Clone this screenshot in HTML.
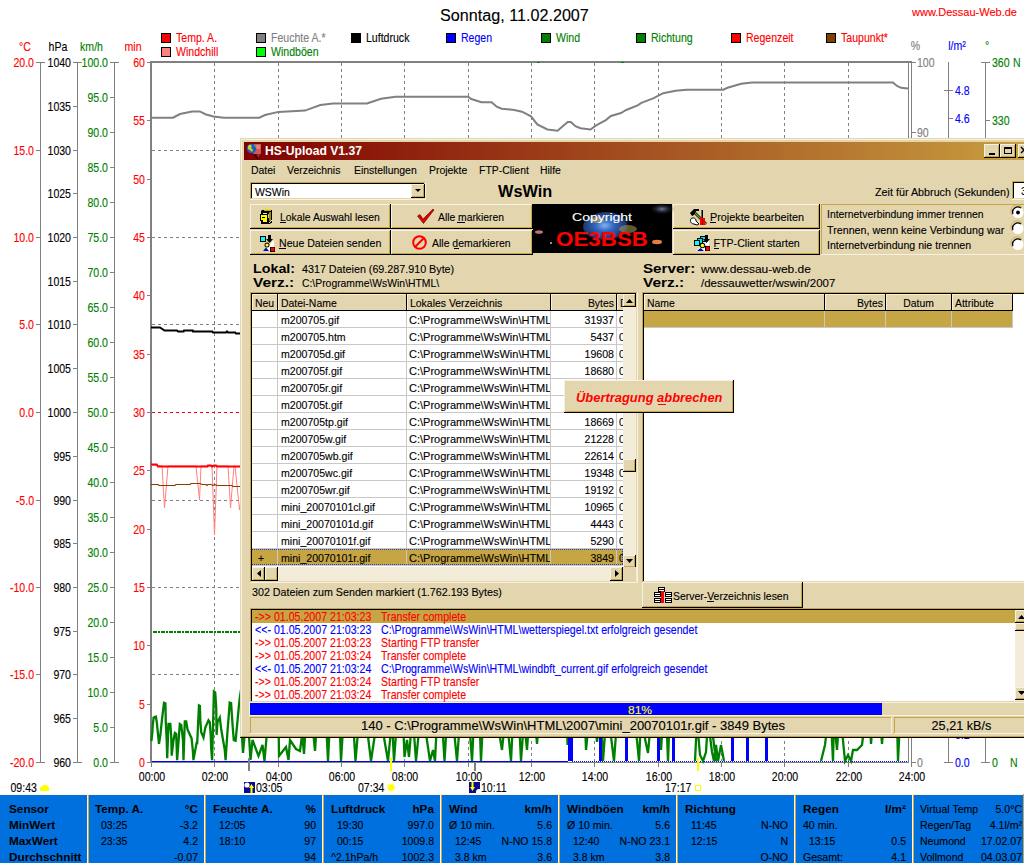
<!DOCTYPE html>
<html><head><meta charset="utf-8"><title>HS-Upload</title>
<style>html,body{margin:0;padding:0;background:#fff;width:1024px;height:863px;overflow:hidden} svg text{white-space:pre}</style>
</head><body>
<svg width="1024" height="863" viewBox="0 0 1024 863" style="position:absolute;left:0;top:0;font-family:'Liberation Sans',sans-serif"><rect x="0" y="0" width="1024" height="863" fill="#fff" /><text transform="translate(440 21) scale(1.01 1)" fill="#000" stroke="#000" stroke-width="0.12" font-size="16" font-weight="normal" font-style="normal" text-anchor="start" >Sonntag, 11.02.2007</text><text x="912" y="16" fill="#f00" stroke="#f00" stroke-width="0.12" font-size="11" font-weight="normal" font-style="normal" text-anchor="start" >www.Dessau-Web.de</text><rect x="161" y="33" width="10" height="10" fill="#000" /><rect x="162" y="34" width="8" height="8" fill="#f00" /><text transform="translate(176 42) scale(0.88 1)" fill="#f00" stroke="#f00" stroke-width="0.12" font-size="12" font-weight="normal" font-style="normal" text-anchor="start" >Temp. A.</text><rect x="256" y="33" width="10" height="10" fill="#000" /><rect x="257" y="34" width="8" height="8" fill="#808080" /><text transform="translate(271 42) scale(0.88 1)" fill="#808080" stroke="#808080" stroke-width="0.12" font-size="12" font-weight="normal" font-style="normal" text-anchor="start" >Feuchte A.*</text><rect x="351" y="33" width="10" height="10" fill="#000" /><rect x="352" y="34" width="8" height="8" fill="#000" /><text transform="translate(366 42) scale(0.88 1)" fill="#000" stroke="#000" stroke-width="0.12" font-size="12" font-weight="normal" font-style="normal" text-anchor="start" >Luftdruck</text><rect x="446" y="33" width="10" height="10" fill="#000" /><rect x="447" y="34" width="8" height="8" fill="#00f" /><text transform="translate(461 42) scale(0.88 1)" fill="#00f" stroke="#00f" stroke-width="0.12" font-size="12" font-weight="normal" font-style="normal" text-anchor="start" >Regen</text><rect x="541" y="33" width="10" height="10" fill="#000" /><rect x="542" y="34" width="8" height="8" fill="#008000" /><text transform="translate(556 42) scale(0.88 1)" fill="#008000" stroke="#008000" stroke-width="0.12" font-size="12" font-weight="normal" font-style="normal" text-anchor="start" >Wind</text><rect x="636" y="33" width="10" height="10" fill="#000" /><rect x="637" y="34" width="8" height="8" fill="#008000" /><text transform="translate(651 42) scale(0.88 1)" fill="#008000" stroke="#008000" stroke-width="0.12" font-size="12" font-weight="normal" font-style="normal" text-anchor="start" >Richtung</text><rect x="731" y="33" width="10" height="10" fill="#000" /><rect x="732" y="34" width="8" height="8" fill="#f00" /><text transform="translate(746 42) scale(0.88 1)" fill="#f00" stroke="#f00" stroke-width="0.12" font-size="12" font-weight="normal" font-style="normal" text-anchor="start" >Regenzeit</text><rect x="826" y="33" width="10" height="10" fill="#000" /><rect x="827" y="34" width="8" height="8" fill="#804000" /><text transform="translate(841 42) scale(0.88 1)" fill="#f00" stroke="#f00" stroke-width="0.12" font-size="12" font-weight="normal" font-style="normal" text-anchor="start" >Taupunkt*</text><rect x="161" y="47" width="10" height="10" fill="#000" /><rect x="162" y="48" width="8" height="8" fill="#ff8080" /><text transform="translate(176 56) scale(0.88 1)" fill="#f00" stroke="#f00" stroke-width="0.12" font-size="12" font-weight="normal" font-style="normal" text-anchor="start" >Windchill</text><rect x="256" y="47" width="10" height="10" fill="#000" /><rect x="257" y="48" width="8" height="8" fill="#00ff00" /><text transform="translate(271 56) scale(0.88 1)" fill="#008000" stroke="#008000" stroke-width="0.12" font-size="12" font-weight="normal" font-style="normal" text-anchor="start" >Windböen</text><text transform="translate(25 51) scale(0.88 1)" fill="#f00" stroke="#f00" stroke-width="0.12" font-size="12" font-weight="normal" font-style="normal" text-anchor="middle" >°C</text><text transform="translate(58 51) scale(0.88 1)" fill="#000" stroke="#000" stroke-width="0.12" font-size="12" font-weight="normal" font-style="normal" text-anchor="middle" >hPa</text><text transform="translate(91.5 51) scale(0.88 1)" fill="#008000" stroke="#008000" stroke-width="0.12" font-size="12" font-weight="normal" font-style="normal" text-anchor="middle" >km/h</text><text transform="translate(133 51) scale(0.88 1)" fill="#f00" stroke="#f00" stroke-width="0.12" font-size="12" font-weight="normal" font-style="normal" text-anchor="middle" >min</text><text transform="translate(915.5 50) scale(0.88 1)" fill="#808080" stroke="#808080" stroke-width="0.12" font-size="12" font-weight="normal" font-style="normal" text-anchor="middle" >%</text><text transform="translate(957 50) scale(0.88 1)" fill="#00f" stroke="#00f" stroke-width="0.12" font-size="12" font-weight="normal" font-style="normal" text-anchor="middle" >l/m²</text><text transform="translate(987 50) scale(0.88 1)" fill="#008000" stroke="#008000" stroke-width="0.12" font-size="12" font-weight="normal" font-style="normal" text-anchor="middle" >°</text><rect x="40" y="62" width="1" height="701" fill="#808080" /><rect x="77" y="62" width="1" height="701" fill="#808080" /><rect x="114" y="62" width="1" height="701" fill="#808080" /><rect x="150" y="61" width="2" height="702" fill="#808080" /><rect x="36" y="62" width="9" height="1" fill="#808080" /><rect x="36" y="762" width="9" height="1" fill="#808080" /><rect x="73" y="62" width="9" height="1" fill="#808080" /><rect x="73" y="762" width="9" height="1" fill="#808080" /><rect x="110" y="62" width="9" height="1" fill="#808080" /><rect x="110" y="762" width="9" height="1" fill="#808080" /><rect x="36" y="62" width="4" height="1" fill="#808080" /><text transform="translate(34 67) scale(0.88 1)" fill="#f00" stroke="#f00" stroke-width="0.12" font-size="12" font-weight="normal" font-style="normal" text-anchor="end" >20.0</text><rect x="36" y="150" width="4" height="1" fill="#808080" /><text transform="translate(34 155) scale(0.88 1)" fill="#f00" stroke="#f00" stroke-width="0.12" font-size="12" font-weight="normal" font-style="normal" text-anchor="end" >15.0</text><rect x="36" y="237" width="4" height="1" fill="#808080" /><text transform="translate(34 242) scale(0.88 1)" fill="#f00" stroke="#f00" stroke-width="0.12" font-size="12" font-weight="normal" font-style="normal" text-anchor="end" >10.0</text><rect x="36" y="324" width="4" height="1" fill="#808080" /><text transform="translate(34 329) scale(0.88 1)" fill="#f00" stroke="#f00" stroke-width="0.12" font-size="12" font-weight="normal" font-style="normal" text-anchor="end" >5.0</text><rect x="36" y="412" width="4" height="1" fill="#808080" /><text transform="translate(34 417) scale(0.88 1)" fill="#f00" stroke="#f00" stroke-width="0.12" font-size="12" font-weight="normal" font-style="normal" text-anchor="end" >0.0</text><rect x="36" y="500" width="4" height="1" fill="#808080" /><text transform="translate(34 505) scale(0.88 1)" fill="#f00" stroke="#f00" stroke-width="0.12" font-size="12" font-weight="normal" font-style="normal" text-anchor="end" >-5.0</text><rect x="36" y="587" width="4" height="1" fill="#808080" /><text transform="translate(34 592) scale(0.88 1)" fill="#f00" stroke="#f00" stroke-width="0.12" font-size="12" font-weight="normal" font-style="normal" text-anchor="end" >-10.0</text><rect x="36" y="674" width="4" height="1" fill="#808080" /><text transform="translate(34 679) scale(0.88 1)" fill="#f00" stroke="#f00" stroke-width="0.12" font-size="12" font-weight="normal" font-style="normal" text-anchor="end" >-15.0</text><rect x="36" y="762" width="4" height="1" fill="#808080" /><text transform="translate(34 767) scale(0.88 1)" fill="#f00" stroke="#f00" stroke-width="0.12" font-size="12" font-weight="normal" font-style="normal" text-anchor="end" >-20.0</text><rect x="73" y="62" width="4" height="1" fill="#808080" /><text transform="translate(71 67) scale(0.88 1)" fill="#000" stroke="#000" stroke-width="0.12" font-size="12" font-weight="normal" font-style="normal" text-anchor="end" >1040</text><rect x="73" y="106" width="4" height="1" fill="#808080" /><text transform="translate(71 111) scale(0.88 1)" fill="#000" stroke="#000" stroke-width="0.12" font-size="12" font-weight="normal" font-style="normal" text-anchor="end" >1035</text><rect x="73" y="150" width="4" height="1" fill="#808080" /><text transform="translate(71 155) scale(0.88 1)" fill="#000" stroke="#000" stroke-width="0.12" font-size="12" font-weight="normal" font-style="normal" text-anchor="end" >1030</text><rect x="73" y="193" width="4" height="1" fill="#808080" /><text transform="translate(71 198) scale(0.88 1)" fill="#000" stroke="#000" stroke-width="0.12" font-size="12" font-weight="normal" font-style="normal" text-anchor="end" >1025</text><rect x="73" y="237" width="4" height="1" fill="#808080" /><text transform="translate(71 242) scale(0.88 1)" fill="#000" stroke="#000" stroke-width="0.12" font-size="12" font-weight="normal" font-style="normal" text-anchor="end" >1020</text><rect x="73" y="281" width="4" height="1" fill="#808080" /><text transform="translate(71 286) scale(0.88 1)" fill="#000" stroke="#000" stroke-width="0.12" font-size="12" font-weight="normal" font-style="normal" text-anchor="end" >1015</text><rect x="73" y="324" width="4" height="1" fill="#808080" /><text transform="translate(71 329) scale(0.88 1)" fill="#000" stroke="#000" stroke-width="0.12" font-size="12" font-weight="normal" font-style="normal" text-anchor="end" >1010</text><rect x="73" y="368" width="4" height="1" fill="#808080" /><text transform="translate(71 373) scale(0.88 1)" fill="#000" stroke="#000" stroke-width="0.12" font-size="12" font-weight="normal" font-style="normal" text-anchor="end" >1005</text><rect x="73" y="412" width="4" height="1" fill="#808080" /><text transform="translate(71 417) scale(0.88 1)" fill="#000" stroke="#000" stroke-width="0.12" font-size="12" font-weight="normal" font-style="normal" text-anchor="end" >1000</text><rect x="73" y="456" width="4" height="1" fill="#808080" /><text transform="translate(71 461) scale(0.88 1)" fill="#000" stroke="#000" stroke-width="0.12" font-size="12" font-weight="normal" font-style="normal" text-anchor="end" >995</text><rect x="73" y="500" width="4" height="1" fill="#808080" /><text transform="translate(71 505) scale(0.88 1)" fill="#000" stroke="#000" stroke-width="0.12" font-size="12" font-weight="normal" font-style="normal" text-anchor="end" >990</text><rect x="73" y="543" width="4" height="1" fill="#808080" /><text transform="translate(71 548) scale(0.88 1)" fill="#000" stroke="#000" stroke-width="0.12" font-size="12" font-weight="normal" font-style="normal" text-anchor="end" >985</text><rect x="73" y="587" width="4" height="1" fill="#808080" /><text transform="translate(71 592) scale(0.88 1)" fill="#000" stroke="#000" stroke-width="0.12" font-size="12" font-weight="normal" font-style="normal" text-anchor="end" >980</text><rect x="73" y="631" width="4" height="1" fill="#808080" /><text transform="translate(71 636) scale(0.88 1)" fill="#000" stroke="#000" stroke-width="0.12" font-size="12" font-weight="normal" font-style="normal" text-anchor="end" >975</text><rect x="73" y="674" width="4" height="1" fill="#808080" /><text transform="translate(71 679) scale(0.88 1)" fill="#000" stroke="#000" stroke-width="0.12" font-size="12" font-weight="normal" font-style="normal" text-anchor="end" >970</text><rect x="73" y="718" width="4" height="1" fill="#808080" /><text transform="translate(71 723) scale(0.88 1)" fill="#000" stroke="#000" stroke-width="0.12" font-size="12" font-weight="normal" font-style="normal" text-anchor="end" >965</text><rect x="73" y="762" width="4" height="1" fill="#808080" /><text transform="translate(71 767) scale(0.88 1)" fill="#000" stroke="#000" stroke-width="0.12" font-size="12" font-weight="normal" font-style="normal" text-anchor="end" >960</text><rect x="110" y="62" width="4" height="1" fill="#808080" /><text transform="translate(108 67) scale(0.88 1)" fill="#008000" stroke="#008000" stroke-width="0.12" font-size="12" font-weight="normal" font-style="normal" text-anchor="end" >100.0</text><rect x="110" y="97" width="4" height="1" fill="#808080" /><text transform="translate(108 102) scale(0.88 1)" fill="#008000" stroke="#008000" stroke-width="0.12" font-size="12" font-weight="normal" font-style="normal" text-anchor="end" >95.0</text><rect x="110" y="132" width="4" height="1" fill="#808080" /><text transform="translate(108 137) scale(0.88 1)" fill="#008000" stroke="#008000" stroke-width="0.12" font-size="12" font-weight="normal" font-style="normal" text-anchor="end" >90.0</text><rect x="110" y="167" width="4" height="1" fill="#808080" /><text transform="translate(108 172) scale(0.88 1)" fill="#008000" stroke="#008000" stroke-width="0.12" font-size="12" font-weight="normal" font-style="normal" text-anchor="end" >85.0</text><rect x="110" y="202" width="4" height="1" fill="#808080" /><text transform="translate(108 207) scale(0.88 1)" fill="#008000" stroke="#008000" stroke-width="0.12" font-size="12" font-weight="normal" font-style="normal" text-anchor="end" >80.0</text><rect x="110" y="237" width="4" height="1" fill="#808080" /><text transform="translate(108 242) scale(0.88 1)" fill="#008000" stroke="#008000" stroke-width="0.12" font-size="12" font-weight="normal" font-style="normal" text-anchor="end" >75.0</text><rect x="110" y="272" width="4" height="1" fill="#808080" /><text transform="translate(108 277) scale(0.88 1)" fill="#008000" stroke="#008000" stroke-width="0.12" font-size="12" font-weight="normal" font-style="normal" text-anchor="end" >70.0</text><rect x="110" y="307" width="4" height="1" fill="#808080" /><text transform="translate(108 312) scale(0.88 1)" fill="#008000" stroke="#008000" stroke-width="0.12" font-size="12" font-weight="normal" font-style="normal" text-anchor="end" >65.0</text><rect x="110" y="342" width="4" height="1" fill="#808080" /><text transform="translate(108 347) scale(0.88 1)" fill="#008000" stroke="#008000" stroke-width="0.12" font-size="12" font-weight="normal" font-style="normal" text-anchor="end" >60.0</text><rect x="110" y="377" width="4" height="1" fill="#808080" /><text transform="translate(108 382) scale(0.88 1)" fill="#008000" stroke="#008000" stroke-width="0.12" font-size="12" font-weight="normal" font-style="normal" text-anchor="end" >55.0</text><rect x="110" y="412" width="4" height="1" fill="#808080" /><text transform="translate(108 417) scale(0.88 1)" fill="#008000" stroke="#008000" stroke-width="0.12" font-size="12" font-weight="normal" font-style="normal" text-anchor="end" >50.0</text><rect x="110" y="447" width="4" height="1" fill="#808080" /><text transform="translate(108 452) scale(0.88 1)" fill="#008000" stroke="#008000" stroke-width="0.12" font-size="12" font-weight="normal" font-style="normal" text-anchor="end" >45.0</text><rect x="110" y="482" width="4" height="1" fill="#808080" /><text transform="translate(108 487) scale(0.88 1)" fill="#008000" stroke="#008000" stroke-width="0.12" font-size="12" font-weight="normal" font-style="normal" text-anchor="end" >40.0</text><rect x="110" y="517" width="4" height="1" fill="#808080" /><text transform="translate(108 522) scale(0.88 1)" fill="#008000" stroke="#008000" stroke-width="0.12" font-size="12" font-weight="normal" font-style="normal" text-anchor="end" >35.0</text><rect x="110" y="552" width="4" height="1" fill="#808080" /><text transform="translate(108 557) scale(0.88 1)" fill="#008000" stroke="#008000" stroke-width="0.12" font-size="12" font-weight="normal" font-style="normal" text-anchor="end" >30.0</text><rect x="110" y="587" width="4" height="1" fill="#808080" /><text transform="translate(108 592) scale(0.88 1)" fill="#008000" stroke="#008000" stroke-width="0.12" font-size="12" font-weight="normal" font-style="normal" text-anchor="end" >25.0</text><rect x="110" y="622" width="4" height="1" fill="#808080" /><text transform="translate(108 627) scale(0.88 1)" fill="#008000" stroke="#008000" stroke-width="0.12" font-size="12" font-weight="normal" font-style="normal" text-anchor="end" >20.0</text><rect x="110" y="657" width="4" height="1" fill="#808080" /><text transform="translate(108 662) scale(0.88 1)" fill="#008000" stroke="#008000" stroke-width="0.12" font-size="12" font-weight="normal" font-style="normal" text-anchor="end" >15.0</text><rect x="110" y="692" width="4" height="1" fill="#808080" /><text transform="translate(108 697) scale(0.88 1)" fill="#008000" stroke="#008000" stroke-width="0.12" font-size="12" font-weight="normal" font-style="normal" text-anchor="end" >10.0</text><rect x="110" y="727" width="4" height="1" fill="#808080" /><text transform="translate(108 732) scale(0.88 1)" fill="#008000" stroke="#008000" stroke-width="0.12" font-size="12" font-weight="normal" font-style="normal" text-anchor="end" >5.0</text><rect x="110" y="762" width="4" height="1" fill="#808080" /><text transform="translate(108 767) scale(0.88 1)" fill="#008000" stroke="#008000" stroke-width="0.12" font-size="12" font-weight="normal" font-style="normal" text-anchor="end" >0.0</text><rect x="147" y="62" width="4" height="1" fill="#808080" /><text transform="translate(145 67) scale(0.88 1)" fill="#f00" stroke="#f00" stroke-width="0.12" font-size="12" font-weight="normal" font-style="normal" text-anchor="end" >60</text><rect x="147" y="120" width="4" height="1" fill="#808080" /><text transform="translate(145 125) scale(0.88 1)" fill="#f00" stroke="#f00" stroke-width="0.12" font-size="12" font-weight="normal" font-style="normal" text-anchor="end" >55</text><rect x="147" y="179" width="4" height="1" fill="#808080" /><text transform="translate(145 184) scale(0.88 1)" fill="#f00" stroke="#f00" stroke-width="0.12" font-size="12" font-weight="normal" font-style="normal" text-anchor="end" >50</text><rect x="147" y="237" width="4" height="1" fill="#808080" /><text transform="translate(145 242) scale(0.88 1)" fill="#f00" stroke="#f00" stroke-width="0.12" font-size="12" font-weight="normal" font-style="normal" text-anchor="end" >45</text><rect x="147" y="295" width="4" height="1" fill="#808080" /><text transform="translate(145 300) scale(0.88 1)" fill="#f00" stroke="#f00" stroke-width="0.12" font-size="12" font-weight="normal" font-style="normal" text-anchor="end" >40</text><rect x="147" y="354" width="4" height="1" fill="#808080" /><text transform="translate(145 359) scale(0.88 1)" fill="#f00" stroke="#f00" stroke-width="0.12" font-size="12" font-weight="normal" font-style="normal" text-anchor="end" >35</text><rect x="147" y="412" width="4" height="1" fill="#808080" /><text transform="translate(145 417) scale(0.88 1)" fill="#f00" stroke="#f00" stroke-width="0.12" font-size="12" font-weight="normal" font-style="normal" text-anchor="end" >30</text><rect x="147" y="470" width="4" height="1" fill="#808080" /><text transform="translate(145 475) scale(0.88 1)" fill="#f00" stroke="#f00" stroke-width="0.12" font-size="12" font-weight="normal" font-style="normal" text-anchor="end" >25</text><rect x="147" y="529" width="4" height="1" fill="#808080" /><text transform="translate(145 534) scale(0.88 1)" fill="#f00" stroke="#f00" stroke-width="0.12" font-size="12" font-weight="normal" font-style="normal" text-anchor="end" >20</text><rect x="147" y="587" width="4" height="1" fill="#808080" /><text transform="translate(145 592) scale(0.88 1)" fill="#f00" stroke="#f00" stroke-width="0.12" font-size="12" font-weight="normal" font-style="normal" text-anchor="end" >15</text><rect x="147" y="645" width="4" height="1" fill="#808080" /><text transform="translate(145 650) scale(0.88 1)" fill="#f00" stroke="#f00" stroke-width="0.12" font-size="12" font-weight="normal" font-style="normal" text-anchor="end" >10</text><rect x="147" y="704" width="4" height="1" fill="#808080" /><text transform="translate(145 709) scale(0.88 1)" fill="#f00" stroke="#f00" stroke-width="0.12" font-size="12" font-weight="normal" font-style="normal" text-anchor="end" >5</text><rect x="147" y="762" width="4" height="1" fill="#808080" /><text transform="translate(145 767) scale(0.88 1)" fill="#f00" stroke="#f00" stroke-width="0.12" font-size="12" font-weight="normal" font-style="normal" text-anchor="end" >0</text><rect x="151" y="61" width="761" height="2" fill="#808080" /><rect x="908" y="61" width="1" height="702" fill="#808080" /><rect x="911" y="61" width="1" height="706" fill="#808080" /><rect x="911" y="62" width="5" height="1" fill="#808080" /><text transform="translate(917 67) scale(0.88 1)" fill="#808080" stroke="#808080" stroke-width="0.12" font-size="12" font-weight="normal" font-style="normal" text-anchor="start" >100</text><rect x="911" y="132" width="5" height="1" fill="#808080" /><text transform="translate(917 137) scale(0.88 1)" fill="#808080" stroke="#808080" stroke-width="0.12" font-size="12" font-weight="normal" font-style="normal" text-anchor="start" >90</text><rect x="911" y="202" width="5" height="1" fill="#808080" /><text transform="translate(917 207) scale(0.88 1)" fill="#808080" stroke="#808080" stroke-width="0.12" font-size="12" font-weight="normal" font-style="normal" text-anchor="start" >80</text><rect x="911" y="272" width="5" height="1" fill="#808080" /><text transform="translate(917 277) scale(0.88 1)" fill="#808080" stroke="#808080" stroke-width="0.12" font-size="12" font-weight="normal" font-style="normal" text-anchor="start" >70</text><rect x="911" y="342" width="5" height="1" fill="#808080" /><text transform="translate(917 347) scale(0.88 1)" fill="#808080" stroke="#808080" stroke-width="0.12" font-size="12" font-weight="normal" font-style="normal" text-anchor="start" >60</text><rect x="911" y="412" width="5" height="1" fill="#808080" /><text transform="translate(917 417) scale(0.88 1)" fill="#808080" stroke="#808080" stroke-width="0.12" font-size="12" font-weight="normal" font-style="normal" text-anchor="start" >50</text><rect x="911" y="482" width="5" height="1" fill="#808080" /><text transform="translate(917 487) scale(0.88 1)" fill="#808080" stroke="#808080" stroke-width="0.12" font-size="12" font-weight="normal" font-style="normal" text-anchor="start" >40</text><rect x="911" y="552" width="5" height="1" fill="#808080" /><text transform="translate(917 557) scale(0.88 1)" fill="#808080" stroke="#808080" stroke-width="0.12" font-size="12" font-weight="normal" font-style="normal" text-anchor="start" >30</text><rect x="911" y="622" width="5" height="1" fill="#808080" /><text transform="translate(917 627) scale(0.88 1)" fill="#808080" stroke="#808080" stroke-width="0.12" font-size="12" font-weight="normal" font-style="normal" text-anchor="start" >20</text><rect x="911" y="692" width="5" height="1" fill="#808080" /><text transform="translate(917 697) scale(0.88 1)" fill="#808080" stroke="#808080" stroke-width="0.12" font-size="12" font-weight="normal" font-style="normal" text-anchor="start" >10</text><rect x="911" y="762" width="5" height="1" fill="#808080" /><text transform="translate(917 767) scale(0.88 1)" fill="#808080" stroke="#808080" stroke-width="0.12" font-size="12" font-weight="normal" font-style="normal" text-anchor="start" >0</text><rect x="948" y="62" width="1" height="701" fill="#808080" /><rect x="944" y="762" width="5" height="1" fill="#808080" /><rect x="948" y="90" width="5" height="1" fill="#808080" /><text transform="translate(955 95) scale(0.88 1)" fill="#00f" stroke="#00f" stroke-width="0.12" font-size="12" font-weight="normal" font-style="normal" text-anchor="start" >4.8</text><rect x="948" y="118" width="5" height="1" fill="#808080" /><text transform="translate(955 123) scale(0.88 1)" fill="#00f" stroke="#00f" stroke-width="0.12" font-size="12" font-weight="normal" font-style="normal" text-anchor="start" >4.6</text><rect x="948" y="146" width="5" height="1" fill="#808080" /><text transform="translate(955 151) scale(0.88 1)" fill="#00f" stroke="#00f" stroke-width="0.12" font-size="12" font-weight="normal" font-style="normal" text-anchor="start" >4.4</text><rect x="948" y="174" width="5" height="1" fill="#808080" /><text transform="translate(955 179) scale(0.88 1)" fill="#00f" stroke="#00f" stroke-width="0.12" font-size="12" font-weight="normal" font-style="normal" text-anchor="start" >4.2</text><rect x="948" y="202" width="5" height="1" fill="#808080" /><text transform="translate(955 207) scale(0.88 1)" fill="#00f" stroke="#00f" stroke-width="0.12" font-size="12" font-weight="normal" font-style="normal" text-anchor="start" >4.0</text><rect x="948" y="230" width="5" height="1" fill="#808080" /><text transform="translate(955 235) scale(0.88 1)" fill="#00f" stroke="#00f" stroke-width="0.12" font-size="12" font-weight="normal" font-style="normal" text-anchor="start" >3.8</text><rect x="948" y="258" width="5" height="1" fill="#808080" /><text transform="translate(955 263) scale(0.88 1)" fill="#00f" stroke="#00f" stroke-width="0.12" font-size="12" font-weight="normal" font-style="normal" text-anchor="start" >3.6</text><rect x="948" y="286" width="5" height="1" fill="#808080" /><text transform="translate(955 291) scale(0.88 1)" fill="#00f" stroke="#00f" stroke-width="0.12" font-size="12" font-weight="normal" font-style="normal" text-anchor="start" >3.4</text><rect x="948" y="314" width="5" height="1" fill="#808080" /><text transform="translate(955 319) scale(0.88 1)" fill="#00f" stroke="#00f" stroke-width="0.12" font-size="12" font-weight="normal" font-style="normal" text-anchor="start" >3.2</text><rect x="948" y="342" width="5" height="1" fill="#808080" /><text transform="translate(955 347) scale(0.88 1)" fill="#00f" stroke="#00f" stroke-width="0.12" font-size="12" font-weight="normal" font-style="normal" text-anchor="start" >3.0</text><rect x="948" y="370" width="5" height="1" fill="#808080" /><text transform="translate(955 375) scale(0.88 1)" fill="#00f" stroke="#00f" stroke-width="0.12" font-size="12" font-weight="normal" font-style="normal" text-anchor="start" >2.8</text><rect x="948" y="398" width="5" height="1" fill="#808080" /><text transform="translate(955 403) scale(0.88 1)" fill="#00f" stroke="#00f" stroke-width="0.12" font-size="12" font-weight="normal" font-style="normal" text-anchor="start" >2.6</text><rect x="948" y="426" width="5" height="1" fill="#808080" /><text transform="translate(955 431) scale(0.88 1)" fill="#00f" stroke="#00f" stroke-width="0.12" font-size="12" font-weight="normal" font-style="normal" text-anchor="start" >2.4</text><rect x="948" y="454" width="5" height="1" fill="#808080" /><text transform="translate(955 459) scale(0.88 1)" fill="#00f" stroke="#00f" stroke-width="0.12" font-size="12" font-weight="normal" font-style="normal" text-anchor="start" >2.2</text><rect x="948" y="482" width="5" height="1" fill="#808080" /><text transform="translate(955 487) scale(0.88 1)" fill="#00f" stroke="#00f" stroke-width="0.12" font-size="12" font-weight="normal" font-style="normal" text-anchor="start" >2.0</text><rect x="948" y="510" width="5" height="1" fill="#808080" /><text transform="translate(955 515) scale(0.88 1)" fill="#00f" stroke="#00f" stroke-width="0.12" font-size="12" font-weight="normal" font-style="normal" text-anchor="start" >1.8</text><rect x="948" y="538" width="5" height="1" fill="#808080" /><text transform="translate(955 543) scale(0.88 1)" fill="#00f" stroke="#00f" stroke-width="0.12" font-size="12" font-weight="normal" font-style="normal" text-anchor="start" >1.6</text><rect x="948" y="566" width="5" height="1" fill="#808080" /><text transform="translate(955 571) scale(0.88 1)" fill="#00f" stroke="#00f" stroke-width="0.12" font-size="12" font-weight="normal" font-style="normal" text-anchor="start" >1.4</text><rect x="948" y="594" width="5" height="1" fill="#808080" /><text transform="translate(955 599) scale(0.88 1)" fill="#00f" stroke="#00f" stroke-width="0.12" font-size="12" font-weight="normal" font-style="normal" text-anchor="start" >1.2</text><rect x="948" y="622" width="5" height="1" fill="#808080" /><text transform="translate(955 627) scale(0.88 1)" fill="#00f" stroke="#00f" stroke-width="0.12" font-size="12" font-weight="normal" font-style="normal" text-anchor="start" >1.0</text><rect x="948" y="650" width="5" height="1" fill="#808080" /><text transform="translate(955 655) scale(0.88 1)" fill="#00f" stroke="#00f" stroke-width="0.12" font-size="12" font-weight="normal" font-style="normal" text-anchor="start" >0.8</text><rect x="948" y="678" width="5" height="1" fill="#808080" /><text transform="translate(955 683) scale(0.88 1)" fill="#00f" stroke="#00f" stroke-width="0.12" font-size="12" font-weight="normal" font-style="normal" text-anchor="start" >0.6</text><rect x="948" y="706" width="5" height="1" fill="#808080" /><text transform="translate(955 711) scale(0.88 1)" fill="#00f" stroke="#00f" stroke-width="0.12" font-size="12" font-weight="normal" font-style="normal" text-anchor="start" >0.4</text><rect x="948" y="734" width="5" height="1" fill="#808080" /><text transform="translate(955 739) scale(0.88 1)" fill="#00f" stroke="#00f" stroke-width="0.12" font-size="12" font-weight="normal" font-style="normal" text-anchor="start" >0.2</text><rect x="948" y="762" width="5" height="1" fill="#808080" /><text transform="translate(955 767) scale(0.88 1)" fill="#00f" stroke="#00f" stroke-width="0.12" font-size="12" font-weight="normal" font-style="normal" text-anchor="start" >0.0</text><rect x="944" y="90" width="5" height="1" fill="#808080" /><rect x="985" y="62" width="1" height="701" fill="#808080" /><rect x="981" y="62" width="9" height="1" fill="#808080" /><rect x="981" y="762" width="5" height="1" fill="#808080" /><rect x="985" y="62" width="5" height="1" fill="#808080" /><rect x="985" y="120" width="5" height="1" fill="#808080" /><rect x="985" y="179" width="5" height="1" fill="#808080" /><rect x="985" y="237" width="5" height="1" fill="#808080" /><rect x="985" y="295" width="5" height="1" fill="#808080" /><rect x="985" y="354" width="5" height="1" fill="#808080" /><rect x="985" y="412" width="5" height="1" fill="#808080" /><rect x="985" y="470" width="5" height="1" fill="#808080" /><rect x="985" y="529" width="5" height="1" fill="#808080" /><rect x="985" y="587" width="5" height="1" fill="#808080" /><rect x="985" y="645" width="5" height="1" fill="#808080" /><rect x="985" y="704" width="5" height="1" fill="#808080" /><rect x="985" y="762" width="5" height="1" fill="#808080" /><text transform="translate(992 67) scale(0.88 1)" fill="#008000" stroke="#008000" stroke-width="0.12" font-size="12" font-weight="normal" font-style="normal" text-anchor="start" >360</text><text transform="translate(1013 67) scale(0.88 1)" fill="#008000" stroke="#008000" stroke-width="0.12" font-size="12" font-weight="normal" font-style="normal" text-anchor="start" >N</text><text transform="translate(992 125) scale(0.88 1)" fill="#008000" stroke="#008000" stroke-width="0.12" font-size="12" font-weight="normal" font-style="normal" text-anchor="start" >330</text><text transform="translate(992 184) scale(0.88 1)" fill="#008000" stroke="#008000" stroke-width="0.12" font-size="12" font-weight="normal" font-style="normal" text-anchor="start" >300</text><text transform="translate(992 242) scale(0.88 1)" fill="#008000" stroke="#008000" stroke-width="0.12" font-size="12" font-weight="normal" font-style="normal" text-anchor="start" >270</text><text transform="translate(1013 242) scale(0.88 1)" fill="#008000" stroke="#008000" stroke-width="0.12" font-size="12" font-weight="normal" font-style="normal" text-anchor="start" >W</text><text transform="translate(992 300) scale(0.88 1)" fill="#008000" stroke="#008000" stroke-width="0.12" font-size="12" font-weight="normal" font-style="normal" text-anchor="start" >240</text><text transform="translate(992 359) scale(0.88 1)" fill="#008000" stroke="#008000" stroke-width="0.12" font-size="12" font-weight="normal" font-style="normal" text-anchor="start" >210</text><text transform="translate(992 417) scale(0.88 1)" fill="#008000" stroke="#008000" stroke-width="0.12" font-size="12" font-weight="normal" font-style="normal" text-anchor="start" >180</text><text transform="translate(1013 417) scale(0.88 1)" fill="#008000" stroke="#008000" stroke-width="0.12" font-size="12" font-weight="normal" font-style="normal" text-anchor="start" >S</text><text transform="translate(992 475) scale(0.88 1)" fill="#008000" stroke="#008000" stroke-width="0.12" font-size="12" font-weight="normal" font-style="normal" text-anchor="start" >150</text><text transform="translate(992 534) scale(0.88 1)" fill="#008000" stroke="#008000" stroke-width="0.12" font-size="12" font-weight="normal" font-style="normal" text-anchor="start" >120</text><text transform="translate(992 592) scale(0.88 1)" fill="#008000" stroke="#008000" stroke-width="0.12" font-size="12" font-weight="normal" font-style="normal" text-anchor="start" >90</text><text transform="translate(1010 592) scale(0.88 1)" fill="#008000" stroke="#008000" stroke-width="0.12" font-size="12" font-weight="normal" font-style="normal" text-anchor="start" >O</text><text transform="translate(992 650) scale(0.88 1)" fill="#008000" stroke="#008000" stroke-width="0.12" font-size="12" font-weight="normal" font-style="normal" text-anchor="start" >60</text><text transform="translate(992 709) scale(0.88 1)" fill="#008000" stroke="#008000" stroke-width="0.12" font-size="12" font-weight="normal" font-style="normal" text-anchor="start" >30</text><text transform="translate(992 767) scale(0.88 1)" fill="#008000" stroke="#008000" stroke-width="0.12" font-size="12" font-weight="normal" font-style="normal" text-anchor="start" >0</text><text transform="translate(1010 767) scale(0.88 1)" fill="#008000" stroke="#008000" stroke-width="0.12" font-size="12" font-weight="normal" font-style="normal" text-anchor="start" >N</text><line x1="214.5" y1="63" x2="214.5" y2="761" stroke="#808080" stroke-width="1" stroke-dasharray="3 3" shape-rendering="crispEdges"/><line x1="278.5" y1="63" x2="278.5" y2="761" stroke="#808080" stroke-width="1" stroke-dasharray="3 3" shape-rendering="crispEdges"/><line x1="341.5" y1="63" x2="341.5" y2="761" stroke="#808080" stroke-width="1" stroke-dasharray="3 3" shape-rendering="crispEdges"/><line x1="404.5" y1="63" x2="404.5" y2="761" stroke="#808080" stroke-width="1" stroke-dasharray="3 3" shape-rendering="crispEdges"/><line x1="468.5" y1="63" x2="468.5" y2="761" stroke="#808080" stroke-width="1" stroke-dasharray="3 3" shape-rendering="crispEdges"/><line x1="531.5" y1="63" x2="531.5" y2="761" stroke="#808080" stroke-width="1" stroke-dasharray="3 3" shape-rendering="crispEdges"/><line x1="594.5" y1="63" x2="594.5" y2="761" stroke="#808080" stroke-width="1" stroke-dasharray="3 3" shape-rendering="crispEdges"/><line x1="658.5" y1="63" x2="658.5" y2="761" stroke="#808080" stroke-width="1" stroke-dasharray="3 3" shape-rendering="crispEdges"/><line x1="721.5" y1="63" x2="721.5" y2="761" stroke="#808080" stroke-width="1" stroke-dasharray="3 3" shape-rendering="crispEdges"/><line x1="784.5" y1="63" x2="784.5" y2="761" stroke="#808080" stroke-width="1" stroke-dasharray="3 3" shape-rendering="crispEdges"/><line x1="848.5" y1="63" x2="848.5" y2="761" stroke="#808080" stroke-width="1" stroke-dasharray="3 3" shape-rendering="crispEdges"/><line x1="152" y1="150.5" x2="908" y2="150.5" stroke="#808080" stroke-width="1" stroke-dasharray="3 3" shape-rendering="crispEdges"/><line x1="152" y1="237.5" x2="908" y2="237.5" stroke="#808080" stroke-width="1" stroke-dasharray="3 3" shape-rendering="crispEdges"/><line x1="152" y1="324.5" x2="908" y2="324.5" stroke="#808080" stroke-width="1" stroke-dasharray="3 3" shape-rendering="crispEdges"/><line x1="152" y1="412.5" x2="908" y2="412.5" stroke="#f00" stroke-width="1" stroke-dasharray="3 3" shape-rendering="crispEdges"/><line x1="152" y1="500.5" x2="908" y2="500.5" stroke="#808080" stroke-width="1" stroke-dasharray="3 3" shape-rendering="crispEdges"/><line x1="152" y1="587.5" x2="908" y2="587.5" stroke="#808080" stroke-width="1" stroke-dasharray="3 3" shape-rendering="crispEdges"/><line x1="152" y1="674.5" x2="908" y2="674.5" stroke="#808080" stroke-width="1" stroke-dasharray="3 3" shape-rendering="crispEdges"/><rect x="151" y="763" width="1" height="4" fill="#808080" /><text transform="translate(152 781) scale(0.88 1)" fill="#000" stroke="#000" stroke-width="0.12" font-size="12" font-weight="normal" font-style="normal" text-anchor="middle" >00:00</text><rect x="214" y="763" width="1" height="4" fill="#808080" /><text transform="translate(215 781) scale(0.88 1)" fill="#000" stroke="#000" stroke-width="0.12" font-size="12" font-weight="normal" font-style="normal" text-anchor="middle" >02:00</text><rect x="278" y="763" width="1" height="4" fill="#808080" /><text transform="translate(279 781) scale(0.88 1)" fill="#000" stroke="#000" stroke-width="0.12" font-size="12" font-weight="normal" font-style="normal" text-anchor="middle" >04:00</text><rect x="341" y="763" width="1" height="4" fill="#808080" /><text transform="translate(342 781) scale(0.88 1)" fill="#000" stroke="#000" stroke-width="0.12" font-size="12" font-weight="normal" font-style="normal" text-anchor="middle" >06:00</text><rect x="404" y="763" width="1" height="4" fill="#808080" /><text transform="translate(405 781) scale(0.88 1)" fill="#000" stroke="#000" stroke-width="0.12" font-size="12" font-weight="normal" font-style="normal" text-anchor="middle" >08:00</text><rect x="468" y="763" width="1" height="4" fill="#808080" /><text transform="translate(469 781) scale(0.88 1)" fill="#000" stroke="#000" stroke-width="0.12" font-size="12" font-weight="normal" font-style="normal" text-anchor="middle" >10:00</text><rect x="531" y="763" width="1" height="4" fill="#808080" /><text transform="translate(532 781) scale(0.88 1)" fill="#000" stroke="#000" stroke-width="0.12" font-size="12" font-weight="normal" font-style="normal" text-anchor="middle" >12:00</text><rect x="594" y="763" width="1" height="4" fill="#808080" /><text transform="translate(595 781) scale(0.88 1)" fill="#000" stroke="#000" stroke-width="0.12" font-size="12" font-weight="normal" font-style="normal" text-anchor="middle" >14:00</text><rect x="658" y="763" width="1" height="4" fill="#808080" /><text transform="translate(659 781) scale(0.88 1)" fill="#000" stroke="#000" stroke-width="0.12" font-size="12" font-weight="normal" font-style="normal" text-anchor="middle" >16:00</text><rect x="721" y="763" width="1" height="4" fill="#808080" /><text transform="translate(722 781) scale(0.88 1)" fill="#000" stroke="#000" stroke-width="0.12" font-size="12" font-weight="normal" font-style="normal" text-anchor="middle" >18:00</text><rect x="784" y="763" width="1" height="4" fill="#808080" /><text transform="translate(785 781) scale(0.88 1)" fill="#000" stroke="#000" stroke-width="0.12" font-size="12" font-weight="normal" font-style="normal" text-anchor="middle" >20:00</text><rect x="848" y="763" width="1" height="4" fill="#808080" /><text transform="translate(849 781) scale(0.88 1)" fill="#000" stroke="#000" stroke-width="0.12" font-size="12" font-weight="normal" font-style="normal" text-anchor="middle" >22:00</text><rect x="911" y="763" width="1" height="4" fill="#808080" /><text transform="translate(912 781) scale(0.88 1)" fill="#000" stroke="#000" stroke-width="0.12" font-size="12" font-weight="normal" font-style="normal" text-anchor="middle" >24:00</text><rect x="152" y="762" width="757" height="1" fill="#808080" /><rect x="537" y="62" width="3" height="1" fill="#008000" /><rect x="621" y="62" width="3" height="1" fill="#008000" /><polyline points="151,117.7 173,117.7 180,114 192,111.4 199.7,111.4 206,114.5 213.6,116.4 223.8,117.7 259.3,117.7 265,115 278.4,111.9 305,110.6 320.3,105 333,103.5 367,103.5 381,98.7 395.6,96.8 468.2,96.8 471.3,99 481.4,102.3 491.6,102.3 496.7,106.7 501.7,108.7 514.4,110 522,111.7 531,116.3 537.3,124.4 547.4,129.5 557.6,130.8 562.7,126.2 567.8,121.9 570.8,121.9 575.4,126.2 580.4,128.2 590.6,129.5 595.7,125.7 605.8,120.1 610.9,116 621,113 626.2,110 637.6,105.4 641.4,102.9 653.7,98.2 663.2,93.2 675.5,90.8 686.5,89.7 723.4,89.7 727.5,87.8 741.2,83.7 752.1,82.6 893,82.6 897,85.9 901.1,87.8 908,88.6" fill="none" stroke="#808080" stroke-width="2" stroke-linejoin="miter" /><polyline points="151,327.5 160,327.5 164.5,330.5 177,330.5 178,331.5 183.6,331.5 184,330.5 192.8,330.5 193,331.5 212.4,331.5 213,332.5 226,332.5 227,331.5 228,332.5 235.3,332.5 236,333.5 241,333.5" fill="none" stroke="#000" stroke-width="2" stroke-linejoin="miter" /><polyline points="151,465 162,466 164.5,508 168,466 196,466 199.5,500 201,466 212,466 214.5,535 217,466 228,466 230.5,508 234,466 235,466 239.5,510 241,500" fill="none" stroke="#ff8080" stroke-width="1" stroke-linejoin="miter" /><polyline points="151,464.5 156.7,464.5 158,466.5 207.5,466.5 208,465.5 211,465.5 212,466.5 214,465.5 216,465.5 217,466.5 241,466.5" fill="none" stroke="#f00" stroke-width="2" stroke-linejoin="miter" /><polyline points="151,484.5 158,484.5 159,485.5 175,485.5 176,484.5 190,484.5 191,483.5 200,483.5 202,484.5 206,484.5 207,485.5 208,484.5 211,484.5 213,485.5 215,484.5 217,485.5 232,485.5 233,486.5 241,486.5" fill="none" stroke="#804000" stroke-width="1.1" stroke-linejoin="miter" /><line x1="153" y1="632" x2="241" y2="632" stroke="#008000" stroke-width="2" stroke-dasharray="4 1 2 1"/><rect x="152" y="761" width="416" height="1" fill="#00f" /><line x1="572" y1="761.5" x2="908" y2="761.5" stroke="#00f" stroke-width="1" stroke-dasharray="1 1" shape-rendering="crispEdges"/><polyline points="151.4,741.2 152.3,733 152.7,725.8 153.6,717.6 155.9,716.7 156.8,722.2 158.1,735.3 159,743.9 160.4,734.8 161.3,725.8 162.2,717.6 163.1,710.4 164,702.7 165.4,703.2 165.8,722.2 166.7,740.2 167.2,758.3 168.5,724 170.3,724 171.2,735.7 171.7,755.6 173.5,740.2 174.9,733 176.2,733.9 177.1,760.1 178.9,736.6 179.8,724 181.2,724.9 183,740.2 183.5,760.1 184.8,721.3 186.2,721.3 187.5,729.4 191.6,738.4 192.9,751.1 193.4,760.1 196.6,743 197.2,743 198.1,724 199,705.4 199.9,705.9 200.3,720.4 201.2,732.1 203.5,737.5 205.3,727.6 208.5,720.4 209.8,722.2 210.7,734.8 211.2,748.4 212.1,760.1 213,727.6 213.9,691.4 215.2,692.3 216.2,706.8 216.6,734.8 217.5,722.2 219.8,717.6 221.1,728.5 222.9,739.3 224.7,749.3 225.6,760.1 227,738.4 227.9,725.8 228.8,714.9 229.7,702.7 231.1,703.2 232,716.7 232.9,729.4 233.8,740.2 235.6,740.7 236.5,731.2 237.4,722.2 238.8,706.8 239.7,698.7 241,690" fill="none" stroke="#008000" stroke-width="2.3" stroke-linejoin="miter" /><polyline points="241,720 243,753 246,720" fill="none" stroke="#008000" stroke-width="2.3" stroke-linejoin="miter" /><polyline points="248,720 250.5,760 252.5,740 258.5,756 262.5,745 264.5,761 268,720" fill="none" stroke="#008000" stroke-width="2.3" stroke-linejoin="miter" /><polyline points="278.5,720 279,756 286,747 288.5,760 290,740 296,749 300,751 304,720" fill="none" stroke="#008000" stroke-width="2.3" stroke-linejoin="miter" /><polyline points="301,720 304,754 306,720" fill="none" stroke="#008000" stroke-width="2.3" stroke-linejoin="miter" /><polyline points="312,720 315,751 317,720" fill="none" stroke="#008000" stroke-width="2.3" stroke-linejoin="miter" /><polyline points="326,720 328,761 330,720" fill="none" stroke="#008000" stroke-width="2.3" stroke-linejoin="miter" /><polyline points="339.5,720 341,761 343.5,720" fill="none" stroke="#008000" stroke-width="2.3" stroke-linejoin="miter" /><polyline points="353,720 355.5,761 359,720" fill="none" stroke="#008000" stroke-width="2.3" stroke-linejoin="miter" /><polyline points="366,720 371,761 377,720" fill="none" stroke="#008000" stroke-width="2.3" stroke-linejoin="miter" /><polyline points="381,720 388,761 392,720 394,761 397,720" fill="none" stroke="#008000" stroke-width="2.3" stroke-linejoin="miter" /><polyline points="403,720 404.5,757 407,740 409,757 412,720" fill="none" stroke="#008000" stroke-width="2.3" stroke-linejoin="miter" /><polyline points="413,720 416,761 420,720" fill="none" stroke="#008000" stroke-width="2.3" stroke-linejoin="miter" /><polyline points="424,720 430,761 433,750 435,761 437,720" fill="none" stroke="#008000" stroke-width="2.3" stroke-linejoin="miter" /><polyline points="442,720 444.5,761 447,720" fill="none" stroke="#008000" stroke-width="2.3" stroke-linejoin="miter" /><polyline points="453,720 457,761 460,720" fill="none" stroke="#008000" stroke-width="2.3" stroke-linejoin="miter" /><polyline points="469,720 472,761 474,720" fill="none" stroke="#008000" stroke-width="2.3" stroke-linejoin="miter" /><polyline points="479.5,720 481,761 483,720" fill="none" stroke="#008000" stroke-width="2.3" stroke-linejoin="miter" /><polyline points="497,720 502,750 505,720" fill="none" stroke="#008000" stroke-width="2.3" stroke-linejoin="miter" /><polyline points="507,720 511,761 513,720" fill="none" stroke="#008000" stroke-width="2.3" stroke-linejoin="miter" /><polyline points="519,720 521,761 524,720 527,750 529,720" fill="none" stroke="#008000" stroke-width="2.3" stroke-linejoin="miter" /><polyline points="535,720 537,744 539,720" fill="none" stroke="#008000" stroke-width="2.3" stroke-linejoin="miter" /><polyline points="567,720 567.5,745 568,720" fill="none" stroke="#008000" stroke-width="2.3" stroke-linejoin="miter" /><polyline points="585,720 586,750 589,720" fill="none" stroke="#008000" stroke-width="2.3" stroke-linejoin="miter" /><polyline points="595,720 597,742 599,720" fill="none" stroke="#008000" stroke-width="2.3" stroke-linejoin="miter" /><polyline points="601,720 603,761 606,720 609,720 614,761 617,720" fill="none" stroke="#008000" stroke-width="2.3" stroke-linejoin="miter" /><polyline points="635,720 639,761 641,720 648,753 651,720" fill="none" stroke="#008000" stroke-width="2.3" stroke-linejoin="miter" /><polyline points="660,720 661,750 663,720" fill="none" stroke="#008000" stroke-width="2.3" stroke-linejoin="miter" /><polyline points="666.5,720 668,761 669.5,720" fill="none" stroke="#008000" stroke-width="2.3" stroke-linejoin="miter" /><polyline points="695,761 697,720 700,755 703,761 706,752 708,720 712,752 714,761 716,745 718,761 721,745 724,761" fill="none" stroke="#008000" stroke-width="2.3" stroke-linejoin="miter" /><polyline points="711,720 716,761" fill="none" stroke="#008000" stroke-width="2.3" stroke-linejoin="miter" /><polyline points="821,761 825,745 828,720" fill="none" stroke="#008000" stroke-width="2.3" stroke-linejoin="miter" /><polyline points="831,720 833,761 834,720 837,750 839,720" fill="none" stroke="#008000" stroke-width="2.3" stroke-linejoin="miter" /><polyline points="841,720 845,761 848,755 851,761 853,750 857,750 862,745 865,720" fill="none" stroke="#008000" stroke-width="2.3" stroke-linejoin="miter" /><polyline points="870,720 871,744 873,720" fill="none" stroke="#008000" stroke-width="2.3" stroke-linejoin="miter" /><polyline points="880,720 882,744 884,720" fill="none" stroke="#008000" stroke-width="2.3" stroke-linejoin="miter" /><polyline points="897,720 898,761 900,720" fill="none" stroke="#008000" stroke-width="2.3" stroke-linejoin="miter" /><rect x="568" y="700" width="5" height="61" fill="#00f" /><rect x="599" y="700" width="3" height="61" fill="#00f" /><rect x="625" y="700" width="3" height="61" fill="#00f" /><rect x="657" y="700" width="3" height="61" fill="#00f" /><rect x="672" y="700" width="3" height="61" fill="#00f" /><rect x="731" y="700" width="3" height="61" fill="#00f" /><rect x="746" y="700" width="3" height="61" fill="#00f" /><rect x="765" y="700" width="3" height="61" fill="#00f" /><text transform="translate(10.5 792) scale(0.88 1)" fill="#000" stroke="#000" stroke-width="0.12" font-size="12" font-weight="normal" font-style="normal" text-anchor="start" >09:43</text><path d="M40,791 L40,788 L42,786 L44,785 L46,785 L48,786 L49,788 L49,791 Z" fill="#ffff00"/><rect x="244" y="782" width="11" height="11" fill="#0a0a90" /><circle cx="247" cy="785" r="2.6" fill="#fff"/><path d="M251.5,784 L254,788 L252.5,788 L252.5,793 L250.5,793 L250.5,788 L249,788 Z" fill="#ffff00"/><text transform="translate(256 792) scale(0.88 1)" fill="#000" stroke="#000" stroke-width="0.12" font-size="12" font-weight="normal" font-style="normal" text-anchor="start" >03:05</text><text transform="translate(358 792) scale(0.88 1)" fill="#000" stroke="#000" stroke-width="0.12" font-size="12" font-weight="normal" font-style="normal" text-anchor="start" >07:34</text><circle cx="391" cy="787.5" r="4.5" fill="#ffffa0"/><circle cx="391" cy="787.5" r="3" fill="#ffff00"/><rect x="469" y="782" width="11" height="11" fill="#0a0a90" /><path d="M472.5,791 L470,787 L471.5,787 L471.5,782 L473.5,782 L473.5,787 L475,787 Z" fill="#ffff00"/><clipPath id="mc"><rect x="469" y="782" width="11" height="11"/></clipPath><circle cx="479" cy="792" r="3" fill="#fff" clip-path="url(#mc)"/><rect x="469" y="782" width="11" height="11" fill="none" /><text transform="translate(481 792) scale(0.88 1)" fill="#000" stroke="#000" stroke-width="0.12" font-size="12" font-weight="normal" font-style="normal" text-anchor="start" >10:11</text><text transform="translate(665 792) scale(0.88 1)" fill="#000" stroke="#000" stroke-width="0.12" font-size="12" font-weight="normal" font-style="normal" text-anchor="start" >17:17</text><rect x="695.5" y="785.5" width="5" height="5" fill="none" stroke="#ffff00" stroke-width="1"/><rect x="697" y="758" width="2" height="13" fill="#ffff00" /><rect x="390" y="758" width="2" height="13" fill="#ffff00" /><rect x="248" y="758" width="2" height="13" fill="#808080" /><rect x="474" y="762" width="2" height="9" fill="#808080" /><rect x="240" y="138" width="790" height="600" fill="#000000" /><rect x="240" y="138" width="790" height="599" fill="#e3d6ae" /><rect x="241" y="139" width="790" height="597" fill="#f7f1e0" /><rect x="241" y="139" width="790" height="597" fill="#f7f1e0" /><rect x="242" y="140" width="790" height="596" fill="#e3d6ae" /><rect x="241" y="736" width="790" height="1" fill="#c6a545" /><defs><linearGradient id="tg" x1="0" y1="0" x2="1" y2="0"><stop offset="0" stop-color="#800000"/><stop offset="1" stop-color="#c8a040"/></linearGradient></defs><rect x="244" y="142" width="790" height="18" fill="url(#tg)" /><rect x="253" y="144" width="8" height="10" fill="#d05858"/><rect x="254" y="145" width="6" height="4" fill="#e88080"/><path d="M254,154 L258,159" stroke="#000" stroke-width="1.2"/><path d="M257,154 L260,154 L258,158 Z" fill="#a03030"/><circle cx="251.5" cy="148.5" r="4.8" fill="#1860c0"/><path d="M248,146 L250,144.5 L252,146 L251,148 L253,150 L252,152 L250,150 L248,149 Z" fill="#d8d020"/><path d="M254,145 L256,146 L255,148 Z" fill="#60b040"/><text transform="translate(265 155) scale(1.01 1)" fill="#fff" font-size="12" font-weight="bold" font-style="normal" text-anchor="start" >HS-Upload V1.37</text><rect x="984" y="144" width="16" height="14" fill="#000000" /><rect x="984" y="144" width="15" height="13" fill="#f7f1e0" /><rect x="985" y="145" width="14" height="12" fill="#c6a545" /><rect x="985" y="145" width="13" height="11" fill="#e3d6ae" /><rect x="1000" y="144" width="16" height="14" fill="#000000" /><rect x="1000" y="144" width="15" height="13" fill="#f7f1e0" /><rect x="1001" y="145" width="14" height="12" fill="#c6a545" /><rect x="1001" y="145" width="13" height="11" fill="#e3d6ae" /><rect x="1018" y="144" width="16" height="14" fill="#000000" /><rect x="1018" y="144" width="15" height="13" fill="#f7f1e0" /><rect x="1019" y="145" width="14" height="12" fill="#c6a545" /><rect x="1019" y="145" width="13" height="11" fill="#e3d6ae" /><rect x="989" y="153" width="6" height="2" fill="#000000" /><rect x="1004" y="147" width="8" height="7" fill="#000000" /><rect x="1005" y="149" width="6" height="4" fill="#e3d6ae" /><path d="M1021,147 l6,6 M1027,147 l-6,6" stroke="#000" stroke-width="1.5"/><text transform="translate(251 174) scale(0.95 1)" fill="#000" stroke="#000" stroke-width="0.12" font-size="11" font-weight="normal" font-style="normal" text-anchor="start" >Datei</text><text transform="translate(287 174) scale(0.95 1)" fill="#000" stroke="#000" stroke-width="0.12" font-size="11" font-weight="normal" font-style="normal" text-anchor="start" >Verzeichnis</text><text transform="translate(354 174) scale(0.95 1)" fill="#000" stroke="#000" stroke-width="0.12" font-size="11" font-weight="normal" font-style="normal" text-anchor="start" >Einstellungen</text><text transform="translate(429 174) scale(0.95 1)" fill="#000" stroke="#000" stroke-width="0.12" font-size="11" font-weight="normal" font-style="normal" text-anchor="start" >Projekte</text><text transform="translate(479 174) scale(0.95 1)" fill="#000" stroke="#000" stroke-width="0.12" font-size="11" font-weight="normal" font-style="normal" text-anchor="start" >FTP-Client</text><text transform="translate(540 174) scale(0.95 1)" fill="#000" stroke="#000" stroke-width="0.12" font-size="11" font-weight="normal" font-style="normal" text-anchor="start" >Hilfe</text><rect x="250" y="182" width="176" height="18" fill="#f7f1e0" /><rect x="250" y="182" width="175" height="17" fill="#c6a545" /><rect x="251" y="183" width="174" height="16" fill="#e3d6ae" /><rect x="251" y="183" width="173" height="15" fill="#000000" /><rect x="252" y="184" width="172" height="14" fill="#fff" /><text transform="translate(255 196) scale(0.95 1)" fill="#000" stroke="#000" stroke-width="0.12" font-size="11" font-weight="normal" font-style="normal" text-anchor="start" >WSWin</text><rect x="411" y="184" width="14" height="14" fill="#000000" /><rect x="411" y="184" width="13" height="13" fill="#f7f1e0" /><rect x="412" y="185" width="12" height="12" fill="#c6a545" /><rect x="412" y="185" width="11" height="11" fill="#e3d6ae" /><path d="M415,189 h6 l-3,3 z" fill="#000"/><text transform="translate(498 197) scale(1.02 1)" fill="#000" font-size="16" font-weight="bold" font-style="normal" text-anchor="start" >WsWin</text><text transform="translate(875 196) scale(0.98 1)" fill="#000" stroke="#000" stroke-width="0.12" font-size="11" font-weight="normal" font-style="normal" text-anchor="start" >Zeit für Abbruch (Sekunden)</text><rect x="1012" y="181" width="20" height="19" fill="#f7f1e0" /><rect x="1012" y="181" width="19" height="18" fill="#c6a545" /><rect x="1013" y="182" width="18" height="17" fill="#e3d6ae" /><rect x="1013" y="182" width="17" height="16" fill="#000000" /><rect x="1014" y="183" width="16" height="15" fill="#fff" /><text transform="translate(1021 195) scale(0.95 1)" fill="#000" stroke="#000" stroke-width="0.12" font-size="11" font-weight="normal" font-style="normal" text-anchor="start" >3</text><rect x="250" y="204" width="141" height="25" fill="#000000" /><rect x="250" y="204" width="140" height="24" fill="#f7f1e0" /><rect x="251" y="205" width="139" height="23" fill="#c6a545" /><rect x="251" y="205" width="138" height="22" fill="#e3d6ae" /><text transform="translate(280 221) scale(0.945 1)" fill="#000" stroke="#000" stroke-width="0.12" font-size="11" font-weight="normal" font-style="normal" text-anchor="start" >Lokale Auswahl lesen</text><rect x="250" y="230" width="141" height="25" fill="#000000" /><rect x="250" y="230" width="140" height="24" fill="#f7f1e0" /><rect x="251" y="231" width="139" height="23" fill="#c6a545" /><rect x="251" y="231" width="138" height="22" fill="#e3d6ae" /><text transform="translate(279 247) scale(0.962 1)" fill="#000" stroke="#000" stroke-width="0.12" font-size="11" font-weight="normal" font-style="normal" text-anchor="start" >Neue Dateien senden</text><rect x="391" y="204" width="142" height="25" fill="#000000" /><rect x="391" y="204" width="141" height="24" fill="#f7f1e0" /><rect x="392" y="205" width="140" height="23" fill="#c6a545" /><rect x="392" y="205" width="139" height="22" fill="#e3d6ae" /><text transform="translate(438 221) scale(0.94 1)" fill="#000" stroke="#000" stroke-width="0.12" font-size="11" font-weight="normal" font-style="normal" text-anchor="start" >Alle markieren</text><rect x="391" y="230" width="142" height="25" fill="#000000" /><rect x="391" y="230" width="141" height="24" fill="#f7f1e0" /><rect x="392" y="231" width="140" height="23" fill="#c6a545" /><rect x="392" y="231" width="139" height="22" fill="#e3d6ae" /><text transform="translate(432 247) scale(0.953 1)" fill="#000" stroke="#000" stroke-width="0.12" font-size="11" font-weight="normal" font-style="normal" text-anchor="start" >Alle demarkieren</text><rect x="673" y="204" width="147" height="25" fill="#000000" /><rect x="673" y="204" width="146" height="24" fill="#f7f1e0" /><rect x="674" y="205" width="145" height="23" fill="#c6a545" /><rect x="674" y="205" width="144" height="22" fill="#e3d6ae" /><text transform="translate(710 221) scale(0.987 1)" fill="#000" stroke="#000" stroke-width="0.12" font-size="11" font-weight="normal" font-style="normal" text-anchor="start" >Projekte bearbeiten</text><rect x="673" y="230" width="147" height="25" fill="#000000" /><rect x="673" y="230" width="146" height="24" fill="#f7f1e0" /><rect x="674" y="231" width="145" height="23" fill="#c6a545" /><rect x="674" y="231" width="144" height="22" fill="#e3d6ae" /><text transform="translate(713.5 247) scale(0.968 1)" fill="#000" stroke="#000" stroke-width="0.12" font-size="11" font-weight="normal" font-style="normal" text-anchor="start" >FTP-Client starten</text><path d="M417.5,216 L420,214.5 L423,219 L433,209 L434,210 L423.5,223.5 Z" fill="#e00000" stroke="#600000" stroke-width="0.6"/><circle cx="419.5" cy="242.5" r="6.3" fill="none" stroke="#f00" stroke-width="2"/><path d="M415,247 l9,-9" stroke="#f00" stroke-width="2"/><g transform="translate(259 208)"><path d="M3,2 h10 v13 h-1 l-1,1 h-9 v-3 h-1 v-7 h1 v-3 z" fill="#000"/><rect x="5" y="1.2" width="7" height="1.6" fill="#e8e000"/><rect x="10" y="4" width="2" height="9" fill="#9a9000"/><rect x="2" y="7" width="6" height="5" fill="#ffff00"/><rect x="3" y="9" width="3" height="1" fill="#000"/><rect x="4" y="12" width="4" height="2" fill="#ffff00"/><rect x="4" y="5" width="4" height="1" fill="#e0e0e0"/><rect x="9" y="6" width="1" height="4" fill="#c0c0c0"/><path d="M10,15 l3,-3" stroke="#e0e0e0" stroke-width="1"/></g><g transform="translate(260 235)"><rect x="0" y="1" width="6" height="6" fill="#000"/><rect x="1" y="2" width="4" height="4" fill="#00ffff"/><path d="M3,16 L14,5 L14,16 Z" fill="#fff"/><path d="M8,0 h3 v4 h2 l-3.5,4 l-3.5,-4 h2 z" fill="#000"/><circle cx="7" cy="10" r="2.5" fill="#000"/><circle cx="7" cy="10" r="1.6" fill="#ffff00"/><path d="M3,16 L6,12.5 L9,16 Z" fill="#0000c0"/><rect x="10" y="12" width="5" height="5" fill="#000"/><rect x="11" y="12.5" width="3.5" height="3.5" fill="#ff0000"/></g><g transform="translate(690 209)"><path d="M3,2 L16,15" stroke="#000" stroke-width="2.6"/><path d="M3,2 L16,15" stroke="#8a8a20" stroke-width="1.4"/><path d="M0,4 L4,0 L9,0 L9,2 L6,2 L4,6 L2,7 Z" fill="#000"/><rect x="11.5" y="1" width="1.5" height="8" fill="#000"/><rect x="10" y="9" width="5" height="7" fill="#ff0000"/><rect x="12" y="10" width="1" height="6" fill="#900"/><path d="M2,9 C-0.5,10 0,15 4,15 L7,16 L9,15 L6,12 C6,10 5,9 3.5,9 Z" fill="#fff" stroke="#000" stroke-width="1"/></g><g transform="translate(694 235)"><path d="M2,16 L15,3 L15,16 Z" fill="#fff"/><rect x="6" y="1" width="6" height="6" fill="#000"/><rect x="7" y="2" width="4" height="4" fill="#00e0f0"/><rect x="3" y="3" width="6" height="6" fill="#000"/><rect x="4" y="4" width="4" height="4" fill="#00e0f0"/><rect x="0" y="5" width="6" height="6" fill="#000"/><rect x="1" y="6" width="4" height="4" fill="#00ffff"/><path d="M11,0 h3 v4 h2 l-3.5,4 l-3.5,-4 h2 z" fill="#000"/><circle cx="8.5" cy="10.5" r="2.8" fill="#000"/><circle cx="8.5" cy="10.5" r="1.8" fill="#ffff00"/><path d="M3,16 L6.5,13 L10,16 Z" fill="#0000c0"/><rect x="11" y="11" width="5" height="5" fill="#000"/><rect x="12" y="12" width="3.5" height="3.5" fill="#ff0000"/></g><rect x="280" y="222" width="6" height="1" fill="#000" /><rect x="279" y="248" width="7" height="1" fill="#000" /><rect x="457" y="222" width="8" height="1" fill="#000" /><rect x="454" y="248" width="5" height="1" fill="#000" /><rect x="710" y="222" width="6" height="1" fill="#000" /><rect x="714" y="248" width="5" height="1" fill="#000" /><rect x="533" y="204" width="139" height="49" fill="#000" /><defs><radialGradient id="gl" cx="0.45" cy="0.45" r="0.55"><stop offset="0" stop-color="#80b0f0"/><stop offset="0.35" stop-color="#3068c0"/><stop offset="0.8" stop-color="#203870"/><stop offset="1" stop-color="#000" stop-opacity="0"/></radialGradient><radialGradient id="st" cx="0.5" cy="0.5" r="0.5"><stop offset="0" stop-color="#7080a0"/><stop offset="1" stop-color="#000" stop-opacity="0"/></radialGradient></defs><ellipse cx="607" cy="227" rx="24" ry="15" fill="url(#gl)"/><ellipse cx="597" cy="220" rx="7" ry="3" fill="#b0a060" opacity="0.7"/><ellipse cx="628" cy="229" rx="9" ry="4" fill="#a09050" opacity="0.6"/><ellipse cx="662" cy="209" rx="13" ry="6" fill="url(#st)"/><text transform="translate(602 221) scale(1.22 1)" fill="#fff" stroke="#fff" stroke-width="0.12" font-size="11.5" font-weight="normal" font-style="normal" text-anchor="middle" >Copyright</text><text transform="translate(602 246) scale(1.09 1)" fill="#f00" font-size="20.5" font-weight="bold" font-style="normal" text-anchor="middle" >OE3BSB</text><ellipse cx="539" cy="232" rx="4" ry="1.8" fill="#c07080"/><ellipse cx="657" cy="242" rx="5" ry="2.2" fill="#e08040"/><circle cx="551" cy="243" r="1" fill="#c0c0c0"/><rect x="821" y="204" width="210" height="51" fill="#c6a545" /><rect x="822" y="205" width="210" height="50" fill="#f7f1e0" /><rect x="822" y="205" width="209" height="49" fill="#e3d6ae" /><rect x="821" y="254" width="210" height="1" fill="#f7f1e0" /><text transform="translate(827 218.0) scale(0.946 1)" fill="#000" stroke="#000" stroke-width="0.12" font-size="11" font-weight="normal" font-style="normal" text-anchor="start" >Internetverbindung immer trennen</text><circle cx="1018" cy="212.5" r="5.5" fill="#fff"/><path d="M1013,214.0 A5.2,5.2 0 0 1 1021,208.0" fill="none" stroke="#000" stroke-width="1.3"/><path d="M1012.3,215.0 A6,6 0 0 1 1022,207.0" fill="none" stroke="#c6a545" stroke-width="0.8"/><text transform="translate(827 233.7) scale(0.975 1)" fill="#000" stroke="#000" stroke-width="0.12" font-size="11" font-weight="normal" font-style="normal" text-anchor="start" >Trennen, wenn keine Verbindung war</text><circle cx="1018" cy="228.5" r="5.5" fill="#fff"/><path d="M1013,230.0 A5.2,5.2 0 0 1 1021,224.0" fill="none" stroke="#000" stroke-width="1.3"/><path d="M1012.3,231.0 A6,6 0 0 1 1022,223.0" fill="none" stroke="#c6a545" stroke-width="0.8"/><text transform="translate(827 249.4) scale(0.963 1)" fill="#000" stroke="#000" stroke-width="0.12" font-size="11" font-weight="normal" font-style="normal" text-anchor="start" >Internetverbindung nie trennen</text><circle cx="1018" cy="244.5" r="5.5" fill="#fff"/><path d="M1013,246.0 A5.2,5.2 0 0 1 1021,240.0" fill="none" stroke="#000" stroke-width="1.3"/><path d="M1012.3,247.0 A6,6 0 0 1 1022,239.0" fill="none" stroke="#c6a545" stroke-width="0.8"/><circle cx="1018" cy="212.5" r="1.9" fill="#000"/><text transform="translate(253 273) scale(1.1 1)" fill="#000" font-size="13" font-weight="bold" font-style="normal" text-anchor="start" >Lokal:</text><text transform="translate(253 287) scale(1.19 1)" fill="#000" font-size="13" font-weight="bold" font-style="normal" text-anchor="start" >Verz.:</text><text transform="translate(302 273) scale(0.977 1)" fill="#000" stroke="#000" stroke-width="0.12" font-size="11" font-weight="normal" font-style="normal" text-anchor="start" >4317 Dateien (69.287.910 Byte)</text><text transform="translate(302 287) scale(0.943 1)" fill="#000" stroke="#000" stroke-width="0.12" font-size="11" font-weight="normal" font-style="normal" text-anchor="start" >C:\Programme\WsWin\HTML\</text><text transform="translate(643 273) scale(1.168 1)" fill="#000" font-size="13" font-weight="bold" font-style="normal" text-anchor="start" >Server:</text><text transform="translate(643 287) scale(1.19 1)" fill="#000" font-size="13" font-weight="bold" font-style="normal" text-anchor="start" >Verz.:</text><text transform="translate(701 273) scale(1.09 1)" fill="#000" stroke="#000" stroke-width="0.12" font-size="11" font-weight="normal" font-style="normal" text-anchor="start" >www.dessau-web.de</text><text transform="translate(701 287) scale(1.042 1)" fill="#000" stroke="#000" stroke-width="0.12" font-size="11" font-weight="normal" font-style="normal" text-anchor="start" >/dessauwetter/wswin/2007</text><rect x="250" y="292" width="388" height="291" fill="#f7f1e0" /><rect x="250" y="292" width="387" height="290" fill="#c6a545" /><rect x="251" y="293" width="386" height="289" fill="#e3d6ae" /><rect x="251" y="293" width="385" height="288" fill="#000000" /><rect x="252" y="294" width="384" height="287" fill="#fff" /><rect x="252" y="294" width="371" height="16" fill="#e3d6ae" /><rect x="252" y="310" width="371" height="1" fill="#000000" /><rect x="252" y="294" width="25" height="1" fill="#f7f1e0" /><rect x="252" y="294" width="1" height="16" fill="#f7f1e0" /><rect x="277" y="294" width="1" height="17" fill="#000000" /><text transform="translate(255 307) scale(0.95 1)" fill="#000" stroke="#000" stroke-width="0.12" font-size="11" font-weight="normal" font-style="normal" text-anchor="start" >Neu</text><rect x="278" y="294" width="128" height="1" fill="#f7f1e0" /><rect x="278" y="294" width="1" height="16" fill="#f7f1e0" /><rect x="406" y="294" width="1" height="17" fill="#000000" /><text transform="translate(281 307) scale(0.95 1)" fill="#000" stroke="#000" stroke-width="0.12" font-size="11" font-weight="normal" font-style="normal" text-anchor="start" >Datei-Name</text><rect x="407" y="294" width="143" height="1" fill="#f7f1e0" /><rect x="407" y="294" width="1" height="16" fill="#f7f1e0" /><rect x="550" y="294" width="1" height="17" fill="#000000" /><text transform="translate(410 307) scale(0.95 1)" fill="#000" stroke="#000" stroke-width="0.12" font-size="11" font-weight="normal" font-style="normal" text-anchor="start" >Lokales Verzeichnis</text><rect x="551" y="294" width="65" height="1" fill="#f7f1e0" /><rect x="551" y="294" width="1" height="16" fill="#f7f1e0" /><rect x="616" y="294" width="1" height="17" fill="#000000" /><text transform="translate(614 307) scale(0.95 1)" fill="#000" stroke="#000" stroke-width="0.12" font-size="11" font-weight="normal" font-style="normal" text-anchor="end" >Bytes</text><rect x="617" y="294" width="6" height="1" fill="#f7f1e0" /><rect x="617" y="294" width="1" height="16" fill="#f7f1e0" /><rect x="623" y="294" width="1" height="17" fill="#000000" /><text transform="translate(620 307) scale(0.95 1)" fill="#000" stroke="#000" stroke-width="0.12" font-size="11" font-weight="normal" font-style="normal" text-anchor="start" >D</text><clipPath id="gc0"><rect x="252" y="311" width="25" height="256"/></clipPath><clipPath id="gc1"><rect x="278" y="311" width="128" height="256"/></clipPath><clipPath id="gc2"><rect x="407" y="311" width="143" height="256"/></clipPath><clipPath id="gc3"><rect x="551" y="311" width="65" height="256"/></clipPath><clipPath id="gc4"><rect x="617" y="311" width="6" height="256"/></clipPath><clipPath id="gclip"><rect x="252" y="311" width="371" height="256"/></clipPath><g clip-path="url(#gclip)"><rect x="252" y="327" width="371" height="1" fill="#c8c8c8" /><rect x="277" y="311" width="1" height="17" fill="#c8c8c8" /><rect x="406" y="311" width="1" height="17" fill="#c8c8c8" /><rect x="550" y="311" width="1" height="17" fill="#c8c8c8" /><rect x="616" y="311" width="1" height="17" fill="#c8c8c8" /><rect x="623" y="311" width="1" height="17" fill="#c8c8c8" /><g clip-path="url(#gc1)"><text transform="translate(281 324) scale(0.962 1)" fill="#000" stroke="#000" stroke-width="0.12" font-size="11" font-weight="normal" font-style="normal" text-anchor="start" >m200705.gif</text></g><g clip-path="url(#gc2)"><text x="409" y="324" fill="#000" stroke="#000" stroke-width="0.12" font-size="11" font-weight="normal" font-style="normal" text-anchor="start" >C:\Programme\WsWin\HTML\2007\</text></g><text transform="translate(614 324) scale(0.962 1)" fill="#000" stroke="#000" stroke-width="0.12" font-size="11" font-weight="normal" font-style="normal" text-anchor="end" >31937</text><g clip-path="url(#gc4)"><text transform="translate(619 324) scale(0.962 1)" fill="#000" stroke="#000" stroke-width="0.12" font-size="11" font-weight="normal" font-style="normal" text-anchor="start" >0</text></g><rect x="252" y="344" width="371" height="1" fill="#c8c8c8" /><rect x="277" y="328" width="1" height="17" fill="#c8c8c8" /><rect x="406" y="328" width="1" height="17" fill="#c8c8c8" /><rect x="550" y="328" width="1" height="17" fill="#c8c8c8" /><rect x="616" y="328" width="1" height="17" fill="#c8c8c8" /><rect x="623" y="328" width="1" height="17" fill="#c8c8c8" /><g clip-path="url(#gc1)"><text transform="translate(281 341) scale(0.962 1)" fill="#000" stroke="#000" stroke-width="0.12" font-size="11" font-weight="normal" font-style="normal" text-anchor="start" >m200705.htm</text></g><g clip-path="url(#gc2)"><text x="409" y="341" fill="#000" stroke="#000" stroke-width="0.12" font-size="11" font-weight="normal" font-style="normal" text-anchor="start" >C:\Programme\WsWin\HTML\2007\</text></g><text transform="translate(614 341) scale(0.962 1)" fill="#000" stroke="#000" stroke-width="0.12" font-size="11" font-weight="normal" font-style="normal" text-anchor="end" >5437</text><g clip-path="url(#gc4)"><text transform="translate(619 341) scale(0.962 1)" fill="#000" stroke="#000" stroke-width="0.12" font-size="11" font-weight="normal" font-style="normal" text-anchor="start" >0</text></g><rect x="252" y="361" width="371" height="1" fill="#c8c8c8" /><rect x="277" y="345" width="1" height="17" fill="#c8c8c8" /><rect x="406" y="345" width="1" height="17" fill="#c8c8c8" /><rect x="550" y="345" width="1" height="17" fill="#c8c8c8" /><rect x="616" y="345" width="1" height="17" fill="#c8c8c8" /><rect x="623" y="345" width="1" height="17" fill="#c8c8c8" /><g clip-path="url(#gc1)"><text transform="translate(281 358) scale(0.962 1)" fill="#000" stroke="#000" stroke-width="0.12" font-size="11" font-weight="normal" font-style="normal" text-anchor="start" >m200705d.gif</text></g><g clip-path="url(#gc2)"><text x="409" y="358" fill="#000" stroke="#000" stroke-width="0.12" font-size="11" font-weight="normal" font-style="normal" text-anchor="start" >C:\Programme\WsWin\HTML\2007\</text></g><text transform="translate(614 358) scale(0.962 1)" fill="#000" stroke="#000" stroke-width="0.12" font-size="11" font-weight="normal" font-style="normal" text-anchor="end" >19608</text><g clip-path="url(#gc4)"><text transform="translate(619 358) scale(0.962 1)" fill="#000" stroke="#000" stroke-width="0.12" font-size="11" font-weight="normal" font-style="normal" text-anchor="start" >0</text></g><rect x="252" y="378" width="371" height="1" fill="#c8c8c8" /><rect x="277" y="362" width="1" height="17" fill="#c8c8c8" /><rect x="406" y="362" width="1" height="17" fill="#c8c8c8" /><rect x="550" y="362" width="1" height="17" fill="#c8c8c8" /><rect x="616" y="362" width="1" height="17" fill="#c8c8c8" /><rect x="623" y="362" width="1" height="17" fill="#c8c8c8" /><g clip-path="url(#gc1)"><text transform="translate(281 375) scale(0.962 1)" fill="#000" stroke="#000" stroke-width="0.12" font-size="11" font-weight="normal" font-style="normal" text-anchor="start" >m200705f.gif</text></g><g clip-path="url(#gc2)"><text x="409" y="375" fill="#000" stroke="#000" stroke-width="0.12" font-size="11" font-weight="normal" font-style="normal" text-anchor="start" >C:\Programme\WsWin\HTML\2007\</text></g><text transform="translate(614 375) scale(0.962 1)" fill="#000" stroke="#000" stroke-width="0.12" font-size="11" font-weight="normal" font-style="normal" text-anchor="end" >18680</text><g clip-path="url(#gc4)"><text transform="translate(619 375) scale(0.962 1)" fill="#000" stroke="#000" stroke-width="0.12" font-size="11" font-weight="normal" font-style="normal" text-anchor="start" >0</text></g><rect x="252" y="395" width="371" height="1" fill="#c8c8c8" /><rect x="277" y="379" width="1" height="17" fill="#c8c8c8" /><rect x="406" y="379" width="1" height="17" fill="#c8c8c8" /><rect x="550" y="379" width="1" height="17" fill="#c8c8c8" /><rect x="616" y="379" width="1" height="17" fill="#c8c8c8" /><rect x="623" y="379" width="1" height="17" fill="#c8c8c8" /><g clip-path="url(#gc1)"><text transform="translate(281 392) scale(0.962 1)" fill="#000" stroke="#000" stroke-width="0.12" font-size="11" font-weight="normal" font-style="normal" text-anchor="start" >m200705r.gif</text></g><g clip-path="url(#gc2)"><text x="409" y="392" fill="#000" stroke="#000" stroke-width="0.12" font-size="11" font-weight="normal" font-style="normal" text-anchor="start" >C:\Programme\WsWin\HTML\2007\</text></g><g clip-path="url(#gc4)"><text transform="translate(619 392) scale(0.962 1)" fill="#000" stroke="#000" stroke-width="0.12" font-size="11" font-weight="normal" font-style="normal" text-anchor="start" >0</text></g><rect x="252" y="412" width="371" height="1" fill="#c8c8c8" /><rect x="277" y="396" width="1" height="17" fill="#c8c8c8" /><rect x="406" y="396" width="1" height="17" fill="#c8c8c8" /><rect x="550" y="396" width="1" height="17" fill="#c8c8c8" /><rect x="616" y="396" width="1" height="17" fill="#c8c8c8" /><rect x="623" y="396" width="1" height="17" fill="#c8c8c8" /><g clip-path="url(#gc1)"><text transform="translate(281 409) scale(0.962 1)" fill="#000" stroke="#000" stroke-width="0.12" font-size="11" font-weight="normal" font-style="normal" text-anchor="start" >m200705t.gif</text></g><g clip-path="url(#gc2)"><text x="409" y="409" fill="#000" stroke="#000" stroke-width="0.12" font-size="11" font-weight="normal" font-style="normal" text-anchor="start" >C:\Programme\WsWin\HTML\2007\</text></g><g clip-path="url(#gc4)"><text transform="translate(619 409) scale(0.962 1)" fill="#000" stroke="#000" stroke-width="0.12" font-size="11" font-weight="normal" font-style="normal" text-anchor="start" >0</text></g><rect x="252" y="429" width="371" height="1" fill="#c8c8c8" /><rect x="277" y="413" width="1" height="17" fill="#c8c8c8" /><rect x="406" y="413" width="1" height="17" fill="#c8c8c8" /><rect x="550" y="413" width="1" height="17" fill="#c8c8c8" /><rect x="616" y="413" width="1" height="17" fill="#c8c8c8" /><rect x="623" y="413" width="1" height="17" fill="#c8c8c8" /><g clip-path="url(#gc1)"><text transform="translate(281 426) scale(0.962 1)" fill="#000" stroke="#000" stroke-width="0.12" font-size="11" font-weight="normal" font-style="normal" text-anchor="start" >m200705tp.gif</text></g><g clip-path="url(#gc2)"><text x="409" y="426" fill="#000" stroke="#000" stroke-width="0.12" font-size="11" font-weight="normal" font-style="normal" text-anchor="start" >C:\Programme\WsWin\HTML\2007\</text></g><text transform="translate(614 426) scale(0.962 1)" fill="#000" stroke="#000" stroke-width="0.12" font-size="11" font-weight="normal" font-style="normal" text-anchor="end" >18669</text><g clip-path="url(#gc4)"><text transform="translate(619 426) scale(0.962 1)" fill="#000" stroke="#000" stroke-width="0.12" font-size="11" font-weight="normal" font-style="normal" text-anchor="start" >0</text></g><rect x="252" y="446" width="371" height="1" fill="#c8c8c8" /><rect x="277" y="430" width="1" height="17" fill="#c8c8c8" /><rect x="406" y="430" width="1" height="17" fill="#c8c8c8" /><rect x="550" y="430" width="1" height="17" fill="#c8c8c8" /><rect x="616" y="430" width="1" height="17" fill="#c8c8c8" /><rect x="623" y="430" width="1" height="17" fill="#c8c8c8" /><g clip-path="url(#gc1)"><text transform="translate(281 443) scale(0.962 1)" fill="#000" stroke="#000" stroke-width="0.12" font-size="11" font-weight="normal" font-style="normal" text-anchor="start" >m200705w.gif</text></g><g clip-path="url(#gc2)"><text x="409" y="443" fill="#000" stroke="#000" stroke-width="0.12" font-size="11" font-weight="normal" font-style="normal" text-anchor="start" >C:\Programme\WsWin\HTML\2007\</text></g><text transform="translate(614 443) scale(0.962 1)" fill="#000" stroke="#000" stroke-width="0.12" font-size="11" font-weight="normal" font-style="normal" text-anchor="end" >21228</text><g clip-path="url(#gc4)"><text transform="translate(619 443) scale(0.962 1)" fill="#000" stroke="#000" stroke-width="0.12" font-size="11" font-weight="normal" font-style="normal" text-anchor="start" >0</text></g><rect x="252" y="463" width="371" height="1" fill="#c8c8c8" /><rect x="277" y="447" width="1" height="17" fill="#c8c8c8" /><rect x="406" y="447" width="1" height="17" fill="#c8c8c8" /><rect x="550" y="447" width="1" height="17" fill="#c8c8c8" /><rect x="616" y="447" width="1" height="17" fill="#c8c8c8" /><rect x="623" y="447" width="1" height="17" fill="#c8c8c8" /><g clip-path="url(#gc1)"><text transform="translate(281 460) scale(0.962 1)" fill="#000" stroke="#000" stroke-width="0.12" font-size="11" font-weight="normal" font-style="normal" text-anchor="start" >m200705wb.gif</text></g><g clip-path="url(#gc2)"><text x="409" y="460" fill="#000" stroke="#000" stroke-width="0.12" font-size="11" font-weight="normal" font-style="normal" text-anchor="start" >C:\Programme\WsWin\HTML\2007\</text></g><text transform="translate(614 460) scale(0.962 1)" fill="#000" stroke="#000" stroke-width="0.12" font-size="11" font-weight="normal" font-style="normal" text-anchor="end" >22614</text><g clip-path="url(#gc4)"><text transform="translate(619 460) scale(0.962 1)" fill="#000" stroke="#000" stroke-width="0.12" font-size="11" font-weight="normal" font-style="normal" text-anchor="start" >0</text></g><rect x="252" y="480" width="371" height="1" fill="#c8c8c8" /><rect x="277" y="464" width="1" height="17" fill="#c8c8c8" /><rect x="406" y="464" width="1" height="17" fill="#c8c8c8" /><rect x="550" y="464" width="1" height="17" fill="#c8c8c8" /><rect x="616" y="464" width="1" height="17" fill="#c8c8c8" /><rect x="623" y="464" width="1" height="17" fill="#c8c8c8" /><g clip-path="url(#gc1)"><text transform="translate(281 477) scale(0.962 1)" fill="#000" stroke="#000" stroke-width="0.12" font-size="11" font-weight="normal" font-style="normal" text-anchor="start" >m200705wc.gif</text></g><g clip-path="url(#gc2)"><text x="409" y="477" fill="#000" stroke="#000" stroke-width="0.12" font-size="11" font-weight="normal" font-style="normal" text-anchor="start" >C:\Programme\WsWin\HTML\2007\</text></g><text transform="translate(614 477) scale(0.962 1)" fill="#000" stroke="#000" stroke-width="0.12" font-size="11" font-weight="normal" font-style="normal" text-anchor="end" >19348</text><g clip-path="url(#gc4)"><text transform="translate(619 477) scale(0.962 1)" fill="#000" stroke="#000" stroke-width="0.12" font-size="11" font-weight="normal" font-style="normal" text-anchor="start" >0</text></g><rect x="252" y="497" width="371" height="1" fill="#c8c8c8" /><rect x="277" y="481" width="1" height="17" fill="#c8c8c8" /><rect x="406" y="481" width="1" height="17" fill="#c8c8c8" /><rect x="550" y="481" width="1" height="17" fill="#c8c8c8" /><rect x="616" y="481" width="1" height="17" fill="#c8c8c8" /><rect x="623" y="481" width="1" height="17" fill="#c8c8c8" /><g clip-path="url(#gc1)"><text transform="translate(281 494) scale(0.962 1)" fill="#000" stroke="#000" stroke-width="0.12" font-size="11" font-weight="normal" font-style="normal" text-anchor="start" >m200705wr.gif</text></g><g clip-path="url(#gc2)"><text x="409" y="494" fill="#000" stroke="#000" stroke-width="0.12" font-size="11" font-weight="normal" font-style="normal" text-anchor="start" >C:\Programme\WsWin\HTML\2007\</text></g><text transform="translate(614 494) scale(0.962 1)" fill="#000" stroke="#000" stroke-width="0.12" font-size="11" font-weight="normal" font-style="normal" text-anchor="end" >19192</text><g clip-path="url(#gc4)"><text transform="translate(619 494) scale(0.962 1)" fill="#000" stroke="#000" stroke-width="0.12" font-size="11" font-weight="normal" font-style="normal" text-anchor="start" >0</text></g><rect x="252" y="514" width="371" height="1" fill="#c8c8c8" /><rect x="277" y="498" width="1" height="17" fill="#c8c8c8" /><rect x="406" y="498" width="1" height="17" fill="#c8c8c8" /><rect x="550" y="498" width="1" height="17" fill="#c8c8c8" /><rect x="616" y="498" width="1" height="17" fill="#c8c8c8" /><rect x="623" y="498" width="1" height="17" fill="#c8c8c8" /><g clip-path="url(#gc1)"><text transform="translate(281 511) scale(0.962 1)" fill="#000" stroke="#000" stroke-width="0.12" font-size="11" font-weight="normal" font-style="normal" text-anchor="start" >mini_20070101cl.gif</text></g><g clip-path="url(#gc2)"><text x="409" y="511" fill="#000" stroke="#000" stroke-width="0.12" font-size="11" font-weight="normal" font-style="normal" text-anchor="start" >C:\Programme\WsWin\HTML\2007\</text></g><text transform="translate(614 511) scale(0.962 1)" fill="#000" stroke="#000" stroke-width="0.12" font-size="11" font-weight="normal" font-style="normal" text-anchor="end" >10965</text><g clip-path="url(#gc4)"><text transform="translate(619 511) scale(0.962 1)" fill="#000" stroke="#000" stroke-width="0.12" font-size="11" font-weight="normal" font-style="normal" text-anchor="start" >0</text></g><rect x="252" y="531" width="371" height="1" fill="#c8c8c8" /><rect x="277" y="515" width="1" height="17" fill="#c8c8c8" /><rect x="406" y="515" width="1" height="17" fill="#c8c8c8" /><rect x="550" y="515" width="1" height="17" fill="#c8c8c8" /><rect x="616" y="515" width="1" height="17" fill="#c8c8c8" /><rect x="623" y="515" width="1" height="17" fill="#c8c8c8" /><g clip-path="url(#gc1)"><text transform="translate(281 528) scale(0.962 1)" fill="#000" stroke="#000" stroke-width="0.12" font-size="11" font-weight="normal" font-style="normal" text-anchor="start" >mini_20070101d.gif</text></g><g clip-path="url(#gc2)"><text x="409" y="528" fill="#000" stroke="#000" stroke-width="0.12" font-size="11" font-weight="normal" font-style="normal" text-anchor="start" >C:\Programme\WsWin\HTML\2007\</text></g><text transform="translate(614 528) scale(0.962 1)" fill="#000" stroke="#000" stroke-width="0.12" font-size="11" font-weight="normal" font-style="normal" text-anchor="end" >4443</text><g clip-path="url(#gc4)"><text transform="translate(619 528) scale(0.962 1)" fill="#000" stroke="#000" stroke-width="0.12" font-size="11" font-weight="normal" font-style="normal" text-anchor="start" >0</text></g><rect x="252" y="548" width="371" height="1" fill="#c8c8c8" /><rect x="277" y="532" width="1" height="17" fill="#c8c8c8" /><rect x="406" y="532" width="1" height="17" fill="#c8c8c8" /><rect x="550" y="532" width="1" height="17" fill="#c8c8c8" /><rect x="616" y="532" width="1" height="17" fill="#c8c8c8" /><rect x="623" y="532" width="1" height="17" fill="#c8c8c8" /><g clip-path="url(#gc1)"><text transform="translate(281 545) scale(0.962 1)" fill="#000" stroke="#000" stroke-width="0.12" font-size="11" font-weight="normal" font-style="normal" text-anchor="start" >mini_20070101f.gif</text></g><g clip-path="url(#gc2)"><text x="409" y="545" fill="#000" stroke="#000" stroke-width="0.12" font-size="11" font-weight="normal" font-style="normal" text-anchor="start" >C:\Programme\WsWin\HTML\2007\</text></g><text transform="translate(614 545) scale(0.962 1)" fill="#000" stroke="#000" stroke-width="0.12" font-size="11" font-weight="normal" font-style="normal" text-anchor="end" >5290</text><g clip-path="url(#gc4)"><text transform="translate(619 545) scale(0.962 1)" fill="#000" stroke="#000" stroke-width="0.12" font-size="11" font-weight="normal" font-style="normal" text-anchor="start" >0</text></g><rect x="252" y="549" width="371" height="16" fill="#c6a545" /><rect x="252" y="565" width="371" height="1" fill="#c8c8c8" /><rect x="277" y="549" width="1" height="17" fill="#c8c8c8" /><rect x="406" y="549" width="1" height="17" fill="#c8c8c8" /><rect x="550" y="549" width="1" height="17" fill="#c8c8c8" /><rect x="616" y="549" width="1" height="17" fill="#c8c8c8" /><rect x="623" y="549" width="1" height="17" fill="#c8c8c8" /><text transform="translate(258 562) scale(0.95 1)" fill="#000" stroke="#000" stroke-width="0.12" font-size="11" font-weight="normal" font-style="normal" text-anchor="start" >+</text><path d="M252,549h1v1h-1zM252,564h1v1h-1zM254,549h1v1h-1zM254,564h1v1h-1zM256,549h1v1h-1zM256,564h1v1h-1zM258,549h1v1h-1zM258,564h1v1h-1zM260,549h1v1h-1zM260,564h1v1h-1zM262,549h1v1h-1zM262,564h1v1h-1zM264,549h1v1h-1zM264,564h1v1h-1zM266,549h1v1h-1zM266,564h1v1h-1zM268,549h1v1h-1zM268,564h1v1h-1zM270,549h1v1h-1zM270,564h1v1h-1zM272,549h1v1h-1zM272,564h1v1h-1zM274,549h1v1h-1zM274,564h1v1h-1zM276,549h1v1h-1zM276,564h1v1h-1zM278,549h1v1h-1zM278,564h1v1h-1zM280,549h1v1h-1zM280,564h1v1h-1zM282,549h1v1h-1zM282,564h1v1h-1zM284,549h1v1h-1zM284,564h1v1h-1zM286,549h1v1h-1zM286,564h1v1h-1zM288,549h1v1h-1zM288,564h1v1h-1zM290,549h1v1h-1zM290,564h1v1h-1zM292,549h1v1h-1zM292,564h1v1h-1zM294,549h1v1h-1zM294,564h1v1h-1zM296,549h1v1h-1zM296,564h1v1h-1zM298,549h1v1h-1zM298,564h1v1h-1zM300,549h1v1h-1zM300,564h1v1h-1zM302,549h1v1h-1zM302,564h1v1h-1zM304,549h1v1h-1zM304,564h1v1h-1zM306,549h1v1h-1zM306,564h1v1h-1zM308,549h1v1h-1zM308,564h1v1h-1zM310,549h1v1h-1zM310,564h1v1h-1zM312,549h1v1h-1zM312,564h1v1h-1zM314,549h1v1h-1zM314,564h1v1h-1zM316,549h1v1h-1zM316,564h1v1h-1zM318,549h1v1h-1zM318,564h1v1h-1zM320,549h1v1h-1zM320,564h1v1h-1zM322,549h1v1h-1zM322,564h1v1h-1zM324,549h1v1h-1zM324,564h1v1h-1zM326,549h1v1h-1zM326,564h1v1h-1zM328,549h1v1h-1zM328,564h1v1h-1zM330,549h1v1h-1zM330,564h1v1h-1zM332,549h1v1h-1zM332,564h1v1h-1zM334,549h1v1h-1zM334,564h1v1h-1zM336,549h1v1h-1zM336,564h1v1h-1zM338,549h1v1h-1zM338,564h1v1h-1zM340,549h1v1h-1zM340,564h1v1h-1zM342,549h1v1h-1zM342,564h1v1h-1zM344,549h1v1h-1zM344,564h1v1h-1zM346,549h1v1h-1zM346,564h1v1h-1zM348,549h1v1h-1zM348,564h1v1h-1zM350,549h1v1h-1zM350,564h1v1h-1zM352,549h1v1h-1zM352,564h1v1h-1zM354,549h1v1h-1zM354,564h1v1h-1zM356,549h1v1h-1zM356,564h1v1h-1zM358,549h1v1h-1zM358,564h1v1h-1zM360,549h1v1h-1zM360,564h1v1h-1zM362,549h1v1h-1zM362,564h1v1h-1zM364,549h1v1h-1zM364,564h1v1h-1zM366,549h1v1h-1zM366,564h1v1h-1zM368,549h1v1h-1zM368,564h1v1h-1zM370,549h1v1h-1zM370,564h1v1h-1zM372,549h1v1h-1zM372,564h1v1h-1zM374,549h1v1h-1zM374,564h1v1h-1zM376,549h1v1h-1zM376,564h1v1h-1zM378,549h1v1h-1zM378,564h1v1h-1zM380,549h1v1h-1zM380,564h1v1h-1zM382,549h1v1h-1zM382,564h1v1h-1zM384,549h1v1h-1zM384,564h1v1h-1zM386,549h1v1h-1zM386,564h1v1h-1zM388,549h1v1h-1zM388,564h1v1h-1zM390,549h1v1h-1zM390,564h1v1h-1zM392,549h1v1h-1zM392,564h1v1h-1zM394,549h1v1h-1zM394,564h1v1h-1zM396,549h1v1h-1zM396,564h1v1h-1zM398,549h1v1h-1zM398,564h1v1h-1zM400,549h1v1h-1zM400,564h1v1h-1zM402,549h1v1h-1zM402,564h1v1h-1zM404,549h1v1h-1zM404,564h1v1h-1zM406,549h1v1h-1zM406,564h1v1h-1zM408,549h1v1h-1zM408,564h1v1h-1zM410,549h1v1h-1zM410,564h1v1h-1zM412,549h1v1h-1zM412,564h1v1h-1zM414,549h1v1h-1zM414,564h1v1h-1zM416,549h1v1h-1zM416,564h1v1h-1zM418,549h1v1h-1zM418,564h1v1h-1zM420,549h1v1h-1zM420,564h1v1h-1zM422,549h1v1h-1zM422,564h1v1h-1zM424,549h1v1h-1zM424,564h1v1h-1zM426,549h1v1h-1zM426,564h1v1h-1zM428,549h1v1h-1zM428,564h1v1h-1zM430,549h1v1h-1zM430,564h1v1h-1zM432,549h1v1h-1zM432,564h1v1h-1zM434,549h1v1h-1zM434,564h1v1h-1zM436,549h1v1h-1zM436,564h1v1h-1zM438,549h1v1h-1zM438,564h1v1h-1zM440,549h1v1h-1zM440,564h1v1h-1zM442,549h1v1h-1zM442,564h1v1h-1zM444,549h1v1h-1zM444,564h1v1h-1zM446,549h1v1h-1zM446,564h1v1h-1zM448,549h1v1h-1zM448,564h1v1h-1zM450,549h1v1h-1zM450,564h1v1h-1zM452,549h1v1h-1zM452,564h1v1h-1zM454,549h1v1h-1zM454,564h1v1h-1zM456,549h1v1h-1zM456,564h1v1h-1zM458,549h1v1h-1zM458,564h1v1h-1zM460,549h1v1h-1zM460,564h1v1h-1zM462,549h1v1h-1zM462,564h1v1h-1zM464,549h1v1h-1zM464,564h1v1h-1zM466,549h1v1h-1zM466,564h1v1h-1zM468,549h1v1h-1zM468,564h1v1h-1zM470,549h1v1h-1zM470,564h1v1h-1zM472,549h1v1h-1zM472,564h1v1h-1zM474,549h1v1h-1zM474,564h1v1h-1zM476,549h1v1h-1zM476,564h1v1h-1zM478,549h1v1h-1zM478,564h1v1h-1zM480,549h1v1h-1zM480,564h1v1h-1zM482,549h1v1h-1zM482,564h1v1h-1zM484,549h1v1h-1zM484,564h1v1h-1zM486,549h1v1h-1zM486,564h1v1h-1zM488,549h1v1h-1zM488,564h1v1h-1zM490,549h1v1h-1zM490,564h1v1h-1zM492,549h1v1h-1zM492,564h1v1h-1zM494,549h1v1h-1zM494,564h1v1h-1zM496,549h1v1h-1zM496,564h1v1h-1zM498,549h1v1h-1zM498,564h1v1h-1zM500,549h1v1h-1zM500,564h1v1h-1zM502,549h1v1h-1zM502,564h1v1h-1zM504,549h1v1h-1zM504,564h1v1h-1zM506,549h1v1h-1zM506,564h1v1h-1zM508,549h1v1h-1zM508,564h1v1h-1zM510,549h1v1h-1zM510,564h1v1h-1zM512,549h1v1h-1zM512,564h1v1h-1zM514,549h1v1h-1zM514,564h1v1h-1zM516,549h1v1h-1zM516,564h1v1h-1zM518,549h1v1h-1zM518,564h1v1h-1zM520,549h1v1h-1zM520,564h1v1h-1zM522,549h1v1h-1zM522,564h1v1h-1zM524,549h1v1h-1zM524,564h1v1h-1zM526,549h1v1h-1zM526,564h1v1h-1zM528,549h1v1h-1zM528,564h1v1h-1zM530,549h1v1h-1zM530,564h1v1h-1zM532,549h1v1h-1zM532,564h1v1h-1zM534,549h1v1h-1zM534,564h1v1h-1zM536,549h1v1h-1zM536,564h1v1h-1zM538,549h1v1h-1zM538,564h1v1h-1zM540,549h1v1h-1zM540,564h1v1h-1zM542,549h1v1h-1zM542,564h1v1h-1zM544,549h1v1h-1zM544,564h1v1h-1zM546,549h1v1h-1zM546,564h1v1h-1zM548,549h1v1h-1zM548,564h1v1h-1zM550,549h1v1h-1zM550,564h1v1h-1zM552,549h1v1h-1zM552,564h1v1h-1zM554,549h1v1h-1zM554,564h1v1h-1zM556,549h1v1h-1zM556,564h1v1h-1zM558,549h1v1h-1zM558,564h1v1h-1zM560,549h1v1h-1zM560,564h1v1h-1zM562,549h1v1h-1zM562,564h1v1h-1zM564,549h1v1h-1zM564,564h1v1h-1zM566,549h1v1h-1zM566,564h1v1h-1zM568,549h1v1h-1zM568,564h1v1h-1zM570,549h1v1h-1zM570,564h1v1h-1zM572,549h1v1h-1zM572,564h1v1h-1zM574,549h1v1h-1zM574,564h1v1h-1zM576,549h1v1h-1zM576,564h1v1h-1zM578,549h1v1h-1zM578,564h1v1h-1zM580,549h1v1h-1zM580,564h1v1h-1zM582,549h1v1h-1zM582,564h1v1h-1zM584,549h1v1h-1zM584,564h1v1h-1zM586,549h1v1h-1zM586,564h1v1h-1zM588,549h1v1h-1zM588,564h1v1h-1zM590,549h1v1h-1zM590,564h1v1h-1zM592,549h1v1h-1zM592,564h1v1h-1zM594,549h1v1h-1zM594,564h1v1h-1zM596,549h1v1h-1zM596,564h1v1h-1zM598,549h1v1h-1zM598,564h1v1h-1zM600,549h1v1h-1zM600,564h1v1h-1zM602,549h1v1h-1zM602,564h1v1h-1zM604,549h1v1h-1zM604,564h1v1h-1zM606,549h1v1h-1zM606,564h1v1h-1zM608,549h1v1h-1zM608,564h1v1h-1zM610,549h1v1h-1zM610,564h1v1h-1zM612,549h1v1h-1zM612,564h1v1h-1zM614,549h1v1h-1zM614,564h1v1h-1zM616,549h1v1h-1zM616,564h1v1h-1zM618,549h1v1h-1zM618,564h1v1h-1zM620,549h1v1h-1zM620,564h1v1h-1zM622,549h1v1h-1zM622,564h1v1h-1zM622,549h1v1h-1zM622,551h1v1h-1zM622,553h1v1h-1zM622,555h1v1h-1zM622,557h1v1h-1zM622,559h1v1h-1zM622,561h1v1h-1zM622,563h1v1h-1z" fill="#2040c0"/><g clip-path="url(#gc1)"><text transform="translate(281 562) scale(0.962 1)" fill="#000" stroke="#000" stroke-width="0.12" font-size="11" font-weight="normal" font-style="normal" text-anchor="start" >mini_20070101r.gif</text></g><g clip-path="url(#gc2)"><text x="409" y="562" fill="#000" stroke="#000" stroke-width="0.12" font-size="11" font-weight="normal" font-style="normal" text-anchor="start" >C:\Programme\WsWin\HTML\2007\</text></g><text transform="translate(614 562) scale(0.962 1)" fill="#000" stroke="#000" stroke-width="0.12" font-size="11" font-weight="normal" font-style="normal" text-anchor="end" >3849</text><g clip-path="url(#gc4)"><text transform="translate(619 562) scale(0.962 1)" fill="#000" stroke="#000" stroke-width="0.12" font-size="11" font-weight="normal" font-style="normal" text-anchor="start" >0</text></g></g><rect x="623" y="294" width="13" height="273" fill="#f3ecd8" /><rect x="623" y="294" width="13" height="13" fill="#000000" /><rect x="623" y="294" width="12" height="12" fill="#f7f1e0" /><rect x="624" y="295" width="11" height="11" fill="#c6a545" /><rect x="624" y="295" width="10" height="10" fill="#e3d6ae" /><path d="M626,303 h7 l-3.5,-4 z" fill="#000"/><rect x="623" y="459" width="13" height="13" fill="#000000" /><rect x="623" y="459" width="12" height="12" fill="#f7f1e0" /><rect x="624" y="460" width="11" height="11" fill="#c6a545" /><rect x="624" y="460" width="10" height="10" fill="#e3d6ae" /><rect x="623" y="555" width="13" height="13" fill="#000000" /><rect x="623" y="555" width="12" height="12" fill="#f7f1e0" /><rect x="624" y="556" width="11" height="11" fill="#c6a545" /><rect x="624" y="556" width="10" height="10" fill="#e3d6ae" /><path d="M626,559 h7 l-3.5,4 z" fill="#000"/><rect x="252" y="567" width="385" height="14" fill="#f3ecd8" /><rect x="252" y="567" width="13" height="14" fill="#000000" /><rect x="252" y="567" width="12" height="13" fill="#f7f1e0" /><rect x="253" y="568" width="11" height="12" fill="#c6a545" /><rect x="253" y="568" width="10" height="11" fill="#e3d6ae" /><path d="M261,570 v7 l-4,-3.5 z" fill="#000"/><rect x="265" y="567" width="13" height="14" fill="#000000" /><rect x="265" y="567" width="12" height="13" fill="#f7f1e0" /><rect x="266" y="568" width="11" height="12" fill="#c6a545" /><rect x="266" y="568" width="10" height="11" fill="#e3d6ae" /><rect x="610" y="567" width="13" height="14" fill="#000000" /><rect x="610" y="567" width="12" height="13" fill="#f7f1e0" /><rect x="611" y="568" width="11" height="12" fill="#c6a545" /><rect x="611" y="568" width="10" height="11" fill="#e3d6ae" /><path d="M615,570 v7 l4,-3.5 z" fill="#000"/><rect x="623" y="567" width="13" height="14" fill="#e3d6ae" /><rect x="642" y="292" width="390" height="291" fill="#f7f1e0" /><rect x="642" y="292" width="390" height="290" fill="#c6a545" /><rect x="643" y="293" width="390" height="289" fill="#e3d6ae" /><rect x="643" y="293" width="390" height="288" fill="#000000" /><rect x="644" y="294" width="390" height="287" fill="#fff" /><rect x="644" y="294" width="369" height="16" fill="#e3d6ae" /><rect x="644" y="310" width="369" height="1" fill="#000000" /><rect x="644" y="294" width="180" height="1" fill="#f7f1e0" /><rect x="644" y="294" width="1" height="16" fill="#f7f1e0" /><rect x="824" y="294" width="1" height="17" fill="#000000" /><text transform="translate(647 307) scale(0.95 1)" fill="#000" stroke="#000" stroke-width="0.12" font-size="11" font-weight="normal" font-style="normal" text-anchor="start" >Name</text><rect x="825" y="294" width="60" height="1" fill="#f7f1e0" /><rect x="825" y="294" width="1" height="16" fill="#f7f1e0" /><rect x="885" y="294" width="1" height="17" fill="#000000" /><text transform="translate(883 307) scale(0.95 1)" fill="#000" stroke="#000" stroke-width="0.12" font-size="11" font-weight="normal" font-style="normal" text-anchor="end" >Bytes</text><rect x="886" y="294" width="65" height="1" fill="#f7f1e0" /><rect x="886" y="294" width="1" height="16" fill="#f7f1e0" /><rect x="951" y="294" width="1" height="17" fill="#000000" /><text transform="translate(918.5 307) scale(0.95 1)" fill="#000" stroke="#000" stroke-width="0.12" font-size="11" font-weight="normal" font-style="normal" text-anchor="middle" >Datum</text><rect x="952" y="294" width="60" height="1" fill="#f7f1e0" /><rect x="952" y="294" width="1" height="16" fill="#f7f1e0" /><rect x="1012" y="294" width="1" height="17" fill="#000000" /><text transform="translate(955 307) scale(0.95 1)" fill="#000" stroke="#000" stroke-width="0.12" font-size="11" font-weight="normal" font-style="normal" text-anchor="start" >Attribute</text><rect x="644" y="311" width="369" height="16" fill="#c6a545" /><rect x="644" y="327" width="369" height="1" fill="#c8c8c8" /><rect x="824" y="311" width="1" height="17" fill="#c8c8c8" /><rect x="885" y="311" width="1" height="17" fill="#c8c8c8" /><rect x="951" y="311" width="1" height="17" fill="#c8c8c8" /><rect x="1012" y="311" width="1" height="17" fill="#c8c8c8" /><rect x="564" y="380" width="170" height="33" fill="#000000" /><rect x="564" y="380" width="169" height="32" fill="#f7f1e0" /><rect x="565" y="381" width="168" height="31" fill="#c6a545" /><rect x="565" y="381" width="167" height="30" fill="#e3d6ae" /><text transform="translate(576 402) scale(0.995 1)" fill="#f00" font-size="13" font-weight="bold" font-style="italic" text-anchor="start" >Übertragung abbrechen</text><rect x="658" y="404" width="8" height="1" fill="#f00" /><text transform="translate(252 596) scale(0.974 1)" fill="#000" stroke="#000" stroke-width="0.12" font-size="11" font-weight="normal" font-style="normal" text-anchor="start" >302 Dateien zum Senden markiert (1.762.193 Bytes)</text><rect x="642" y="582" width="161" height="26" fill="#000000" /><rect x="642" y="582" width="160" height="25" fill="#f7f1e0" /><rect x="643" y="583" width="159" height="24" fill="#c6a545" /><rect x="643" y="583" width="158" height="23" fill="#e3d6ae" /><text transform="translate(673 600) scale(0.95 1)" fill="#000" stroke="#000" stroke-width="0.12" font-size="11" font-weight="normal" font-style="normal" text-anchor="start" >Server-Verzeichnis lesen</text><rect x="658.5" y="587.5" width="6" height="4" fill="#fff" stroke="#000" stroke-width="1"/><rect x="659" y="589" width="5" height="1" fill="#000"/><rect x="654.5" y="592.5" width="6" height="4" fill="#fff" stroke="#000" stroke-width="1"/><rect x="655" y="594" width="5" height="1" fill="#000"/><rect x="665.5" y="592.5" width="6" height="4" fill="#fff" stroke="#000" stroke-width="1"/><rect x="666" y="594" width="5" height="1" fill="#000"/><rect x="654.5" y="598.5" width="6" height="4" fill="#fff" stroke="#000" stroke-width="1"/><rect x="655" y="600" width="5" height="1" fill="#000"/><rect x="665.5" y="598.5" width="6" height="4" fill="#fff" stroke="#000" stroke-width="1"/><rect x="666" y="600" width="5" height="1" fill="#000"/><rect x="661" y="591" width="3" height="12" fill="#f00" /><rect x="707" y="601" width="7" height="1" fill="#000" /><rect x="250" y="608" width="790" height="94" fill="#e3d6ae" /><rect x="250" y="608" width="790" height="93" fill="#c6a545" /><rect x="251" y="609" width="790" height="92" fill="#000000" /><rect x="252" y="610" width="790" height="91" fill="#fff" /><rect x="252" y="610" width="763" height="13" fill="#c6a545" /><text transform="translate(255 621) scale(0.8855 1)" fill="#f00" stroke="#f00" stroke-width="0.12" font-size="12" font-weight="normal" font-style="normal" text-anchor="start" >-&gt;&gt; 01.05.2007 21:03:23</text><text transform="translate(381 621) scale(0.8855 1)" fill="#f00" stroke="#f00" stroke-width="0.12" font-size="12" font-weight="normal" font-style="normal" text-anchor="start" >Transfer complete</text><text transform="translate(255 634) scale(0.8855 1)" fill="#00f" stroke="#00f" stroke-width="0.12" font-size="12" font-weight="normal" font-style="normal" text-anchor="start" >&lt;&lt;- 01.05.2007 21:03:23</text><text transform="translate(381 634) scale(0.8855 1)" fill="#00f" stroke="#00f" stroke-width="0.12" font-size="12" font-weight="normal" font-style="normal" text-anchor="start" >C:\Programme\WsWin\HTML\wetterspiegel.txt erfolgreich gesendet</text><text transform="translate(255 647) scale(0.8855 1)" fill="#f00" stroke="#f00" stroke-width="0.12" font-size="12" font-weight="normal" font-style="normal" text-anchor="start" >-&gt;&gt; 01.05.2007 21:03:23</text><text transform="translate(381 647) scale(0.8855 1)" fill="#f00" stroke="#f00" stroke-width="0.12" font-size="12" font-weight="normal" font-style="normal" text-anchor="start" >Starting FTP transfer</text><text transform="translate(255 660) scale(0.8855 1)" fill="#f00" stroke="#f00" stroke-width="0.12" font-size="12" font-weight="normal" font-style="normal" text-anchor="start" >-&gt;&gt; 01.05.2007 21:03:24</text><text transform="translate(381 660) scale(0.8855 1)" fill="#f00" stroke="#f00" stroke-width="0.12" font-size="12" font-weight="normal" font-style="normal" text-anchor="start" >Transfer complete</text><text transform="translate(255 673) scale(0.8855 1)" fill="#00f" stroke="#00f" stroke-width="0.12" font-size="12" font-weight="normal" font-style="normal" text-anchor="start" >&lt;&lt;- 01.05.2007 21:03:24</text><text transform="translate(381 673) scale(0.8855 1)" fill="#00f" stroke="#00f" stroke-width="0.12" font-size="12" font-weight="normal" font-style="normal" text-anchor="start" >C:\Programme\WsWin\HTML\windbft_current.gif erfolgreich gesendet</text><text transform="translate(255 686) scale(0.8855 1)" fill="#f00" stroke="#f00" stroke-width="0.12" font-size="12" font-weight="normal" font-style="normal" text-anchor="start" >-&gt;&gt; 01.05.2007 21:03:24</text><text transform="translate(381 686) scale(0.8855 1)" fill="#f00" stroke="#f00" stroke-width="0.12" font-size="12" font-weight="normal" font-style="normal" text-anchor="start" >Starting FTP transfer</text><text transform="translate(255 699) scale(0.8855 1)" fill="#f00" stroke="#f00" stroke-width="0.12" font-size="12" font-weight="normal" font-style="normal" text-anchor="start" >-&gt;&gt; 01.05.2007 21:03:24</text><text transform="translate(381 699) scale(0.8855 1)" fill="#f00" stroke="#f00" stroke-width="0.12" font-size="12" font-weight="normal" font-style="normal" text-anchor="start" >Transfer complete</text><rect x="1015" y="610" width="13" height="91" fill="#f3ecd8" /><rect x="1015" y="610" width="13" height="13" fill="#000000" /><rect x="1015" y="610" width="12" height="12" fill="#f7f1e0" /><rect x="1016" y="611" width="11" height="11" fill="#c6a545" /><rect x="1016" y="611" width="10" height="10" fill="#e3d6ae" /><path d="M1018,619 h7 l-3.5,-4 z" fill="#000"/><rect x="1015" y="623" width="13" height="8" fill="#000000" /><rect x="1015" y="623" width="12" height="7" fill="#f7f1e0" /><rect x="1016" y="624" width="11" height="6" fill="#c6a545" /><rect x="1016" y="624" width="10" height="5" fill="#e3d6ae" /><rect x="1015" y="687" width="13" height="13" fill="#000000" /><rect x="1015" y="687" width="12" height="12" fill="#f7f1e0" /><rect x="1016" y="688" width="11" height="11" fill="#c6a545" /><rect x="1016" y="688" width="10" height="10" fill="#e3d6ae" /><path d="M1018,691 h7 l-3.5,4 z" fill="#000"/><rect x="249" y="702" width="790" height="14" fill="#f7f1e0" /><rect x="250" y="703" width="790" height="12" fill="#e3d6ae" /><rect x="250" y="703" width="632" height="12" fill="#0000ff" /><text transform="translate(640 714) scale(1.09 1)" fill="#ffff00" stroke="#ffff00" stroke-width="0.12" font-size="11" font-weight="normal" font-style="normal" text-anchor="middle" >81%</text><rect x="250" y="717" width="642" height="17" fill="#f7f1e0" /><rect x="250" y="717" width="641" height="16" fill="#c6a545" /><rect x="251" y="718" width="640" height="15" fill="#e3d6ae" /><rect x="894" y="717" width="140" height="17" fill="#f7f1e0" /><rect x="894" y="717" width="139" height="16" fill="#c6a545" /><rect x="895" y="718" width="138" height="15" fill="#e3d6ae" /><text x="573" y="730" fill="#000" stroke="#000" stroke-width="0.12" font-size="13" font-weight="normal" font-style="normal" text-anchor="middle" >140 - C:\Programme\WsWin\HTML\2007\mini_20070101r.gif - 3849 Bytes</text><text transform="translate(961.5 730) scale(0.975 1)" fill="#000" stroke="#000" stroke-width="0.12" font-size="13" font-weight="normal" font-style="normal" text-anchor="middle" >25,21 kB/s</text><rect x="0" y="794" width="1023" height="1" fill="#fff4dc" /><rect x="0" y="795" width="1024" height="68" fill="#0070de" /><rect x="87" y="795" width="1" height="68" fill="#fff4dc" /><rect x="88" y="795" width="1" height="68" fill="#d0a840" /><rect x="204" y="795" width="1" height="68" fill="#fff4dc" /><rect x="205" y="795" width="1" height="68" fill="#d0a840" /><rect x="322" y="795" width="1" height="68" fill="#fff4dc" /><rect x="323" y="795" width="1" height="68" fill="#d0a840" /><rect x="440" y="795" width="1" height="68" fill="#fff4dc" /><rect x="441" y="795" width="1" height="68" fill="#d0a840" /><rect x="558" y="795" width="1" height="68" fill="#fff4dc" /><rect x="559" y="795" width="1" height="68" fill="#d0a840" /><rect x="676" y="795" width="1" height="68" fill="#fff4dc" /><rect x="677" y="795" width="1" height="68" fill="#d0a840" /><rect x="794" y="795" width="1" height="68" fill="#fff4dc" /><rect x="795" y="795" width="1" height="68" fill="#d0a840" /><rect x="912" y="795" width="1" height="68" fill="#fff4dc" /><rect x="913" y="795" width="1" height="68" fill="#d0a840" /><rect x="1023" y="794" width="1" height="69" fill="#d0a840" /><text transform="translate(9 813) scale(1.07 1)" fill="#000" font-size="11" font-weight="bold" font-style="normal" text-anchor="start" >Sensor</text><text transform="translate(9 829) scale(1.07 1)" fill="#000" font-size="11" font-weight="bold" font-style="normal" text-anchor="start" >MinWert</text><text transform="translate(9 845) scale(1.07 1)" fill="#000" font-size="11" font-weight="bold" font-style="normal" text-anchor="start" >MaxWert</text><text transform="translate(9 861) scale(1.07 1)" fill="#000" font-size="11" font-weight="bold" font-style="normal" text-anchor="start" >Durchschnitt</text><text transform="translate(95 813) scale(1.07 1)" fill="#000" font-size="11" font-weight="bold" font-style="normal" text-anchor="start" >Temp. A.</text><text transform="translate(198 813) scale(1.07 1)" fill="#000" font-size="11" font-weight="bold" font-style="normal" text-anchor="end" >°C</text><text transform="translate(101 829) scale(0.96 1)" fill="#000" stroke="#000" stroke-width="0.12" font-size="11" font-weight="normal" font-style="normal" text-anchor="start" >03:25</text><text transform="translate(198 829) scale(0.96 1)" fill="#000" stroke="#000" stroke-width="0.12" font-size="11" font-weight="normal" font-style="normal" text-anchor="end" >-3.2</text><text transform="translate(101 845) scale(0.96 1)" fill="#000" stroke="#000" stroke-width="0.12" font-size="11" font-weight="normal" font-style="normal" text-anchor="start" >23:35</text><text transform="translate(198 845) scale(0.96 1)" fill="#000" stroke="#000" stroke-width="0.12" font-size="11" font-weight="normal" font-style="normal" text-anchor="end" >4.2</text><text transform="translate(198 861) scale(0.96 1)" fill="#000" stroke="#000" stroke-width="0.12" font-size="11" font-weight="normal" font-style="normal" text-anchor="end" >-0.07</text><text transform="translate(213 813) scale(1.07 1)" fill="#000" font-size="11" font-weight="bold" font-style="normal" text-anchor="start" >Feuchte A.</text><text transform="translate(316 813) scale(1.07 1)" fill="#000" font-size="11" font-weight="bold" font-style="normal" text-anchor="end" >%</text><text transform="translate(219 829) scale(0.96 1)" fill="#000" stroke="#000" stroke-width="0.12" font-size="11" font-weight="normal" font-style="normal" text-anchor="start" >12:05</text><text transform="translate(316 829) scale(0.96 1)" fill="#000" stroke="#000" stroke-width="0.12" font-size="11" font-weight="normal" font-style="normal" text-anchor="end" >90</text><text transform="translate(219 845) scale(0.96 1)" fill="#000" stroke="#000" stroke-width="0.12" font-size="11" font-weight="normal" font-style="normal" text-anchor="start" >18:10</text><text transform="translate(316 845) scale(0.96 1)" fill="#000" stroke="#000" stroke-width="0.12" font-size="11" font-weight="normal" font-style="normal" text-anchor="end" >97</text><text transform="translate(316 861) scale(0.96 1)" fill="#000" stroke="#000" stroke-width="0.12" font-size="11" font-weight="normal" font-style="normal" text-anchor="end" >94</text><text transform="translate(331 813) scale(1.07 1)" fill="#000" font-size="11" font-weight="bold" font-style="normal" text-anchor="start" >Luftdruck</text><text transform="translate(434 813) scale(1.07 1)" fill="#000" font-size="11" font-weight="bold" font-style="normal" text-anchor="end" >hPa</text><text transform="translate(337 829) scale(0.96 1)" fill="#000" stroke="#000" stroke-width="0.12" font-size="11" font-weight="normal" font-style="normal" text-anchor="start" >19:30</text><text transform="translate(434 829) scale(0.96 1)" fill="#000" stroke="#000" stroke-width="0.12" font-size="11" font-weight="normal" font-style="normal" text-anchor="end" >997.0</text><text transform="translate(337 845) scale(0.96 1)" fill="#000" stroke="#000" stroke-width="0.12" font-size="11" font-weight="normal" font-style="normal" text-anchor="start" >00:15</text><text transform="translate(434 845) scale(0.96 1)" fill="#000" stroke="#000" stroke-width="0.12" font-size="11" font-weight="normal" font-style="normal" text-anchor="end" >1009.8</text><text transform="translate(331 861) scale(0.96 1)" fill="#000" stroke="#000" stroke-width="0.12" font-size="11" font-weight="normal" font-style="normal" text-anchor="start" >^2.1hPa/h</text><text transform="translate(434 861) scale(0.96 1)" fill="#000" stroke="#000" stroke-width="0.12" font-size="11" font-weight="normal" font-style="normal" text-anchor="end" >1002.3</text><text transform="translate(449 813) scale(1.07 1)" fill="#000" font-size="11" font-weight="bold" font-style="normal" text-anchor="start" >Wind</text><text transform="translate(552 813) scale(1.07 1)" fill="#000" font-size="11" font-weight="bold" font-style="normal" text-anchor="end" >km/h</text><text transform="translate(449 829) scale(0.96 1)" fill="#000" stroke="#000" stroke-width="0.12" font-size="11" font-weight="normal" font-style="normal" text-anchor="start" >Ø 10 min.</text><text transform="translate(552 829) scale(0.96 1)" fill="#000" stroke="#000" stroke-width="0.12" font-size="11" font-weight="normal" font-style="normal" text-anchor="end" >5.6</text><text transform="translate(455 845) scale(0.96 1)" fill="#000" stroke="#000" stroke-width="0.12" font-size="11" font-weight="normal" font-style="normal" text-anchor="start" >12:45</text><text transform="translate(552 845) scale(0.96 1)" fill="#000" stroke="#000" stroke-width="0.12" font-size="11" font-weight="normal" font-style="normal" text-anchor="end" >N-NO 15.8</text><text transform="translate(455 861) scale(0.96 1)" fill="#000" stroke="#000" stroke-width="0.12" font-size="11" font-weight="normal" font-style="normal" text-anchor="start" >3.8 km</text><text transform="translate(552 861) scale(0.96 1)" fill="#000" stroke="#000" stroke-width="0.12" font-size="11" font-weight="normal" font-style="normal" text-anchor="end" >3.6</text><text transform="translate(567 813) scale(1.07 1)" fill="#000" font-size="11" font-weight="bold" font-style="normal" text-anchor="start" >Windböen</text><text transform="translate(670 813) scale(1.07 1)" fill="#000" font-size="11" font-weight="bold" font-style="normal" text-anchor="end" >km/h</text><text transform="translate(567 829) scale(0.96 1)" fill="#000" stroke="#000" stroke-width="0.12" font-size="11" font-weight="normal" font-style="normal" text-anchor="start" >Ø 10 min.</text><text transform="translate(670 829) scale(0.96 1)" fill="#000" stroke="#000" stroke-width="0.12" font-size="11" font-weight="normal" font-style="normal" text-anchor="end" >5.6</text><text transform="translate(573 845) scale(0.96 1)" fill="#000" stroke="#000" stroke-width="0.12" font-size="11" font-weight="normal" font-style="normal" text-anchor="start" >12:40</text><text transform="translate(670 845) scale(0.96 1)" fill="#000" stroke="#000" stroke-width="0.12" font-size="11" font-weight="normal" font-style="normal" text-anchor="end" >N-NO 23.1</text><text transform="translate(573 861) scale(0.96 1)" fill="#000" stroke="#000" stroke-width="0.12" font-size="11" font-weight="normal" font-style="normal" text-anchor="start" >3.8 km</text><text transform="translate(670 861) scale(0.96 1)" fill="#000" stroke="#000" stroke-width="0.12" font-size="11" font-weight="normal" font-style="normal" text-anchor="end" >3.8</text><text transform="translate(685 813) scale(1.07 1)" fill="#000" font-size="11" font-weight="bold" font-style="normal" text-anchor="start" >Richtung</text><text transform="translate(788 813) scale(1.07 1)" fill="#000" font-size="11" font-weight="bold" font-style="normal" text-anchor="end" ></text><text transform="translate(691 829) scale(0.96 1)" fill="#000" stroke="#000" stroke-width="0.12" font-size="11" font-weight="normal" font-style="normal" text-anchor="start" >11:45</text><text transform="translate(788 829) scale(0.96 1)" fill="#000" stroke="#000" stroke-width="0.12" font-size="11" font-weight="normal" font-style="normal" text-anchor="end" >N-NO</text><text transform="translate(691 845) scale(0.96 1)" fill="#000" stroke="#000" stroke-width="0.12" font-size="11" font-weight="normal" font-style="normal" text-anchor="start" >12:15</text><text transform="translate(788 845) scale(0.96 1)" fill="#000" stroke="#000" stroke-width="0.12" font-size="11" font-weight="normal" font-style="normal" text-anchor="end" >N</text><text transform="translate(788 861) scale(0.96 1)" fill="#000" stroke="#000" stroke-width="0.12" font-size="11" font-weight="normal" font-style="normal" text-anchor="end" >O-NO</text><text transform="translate(803 813) scale(1.07 1)" fill="#000" font-size="11" font-weight="bold" font-style="normal" text-anchor="start" >Regen</text><text transform="translate(906 813) scale(1.07 1)" fill="#000" font-size="11" font-weight="bold" font-style="normal" text-anchor="end" >l/m²</text><text transform="translate(803 829) scale(0.96 1)" fill="#000" stroke="#000" stroke-width="0.12" font-size="11" font-weight="normal" font-style="normal" text-anchor="start" >40 min.</text><text transform="translate(809 845) scale(0.96 1)" fill="#000" stroke="#000" stroke-width="0.12" font-size="11" font-weight="normal" font-style="normal" text-anchor="start" >13:15</text><text transform="translate(906 845) scale(0.96 1)" fill="#000" stroke="#000" stroke-width="0.12" font-size="11" font-weight="normal" font-style="normal" text-anchor="end" >0.5</text><text transform="translate(803 861) scale(0.96 1)" fill="#000" stroke="#000" stroke-width="0.12" font-size="11" font-weight="normal" font-style="normal" text-anchor="start" >Gesamt:</text><text transform="translate(906 861) scale(0.96 1)" fill="#000" stroke="#000" stroke-width="0.12" font-size="11" font-weight="normal" font-style="normal" text-anchor="end" >4.1</text><text transform="translate(920 813) scale(0.96 1)" fill="#000" stroke="#000" stroke-width="0.12" font-size="11" font-weight="normal" font-style="normal" text-anchor="start" >Virtual Temp</text><text transform="translate(1022 813) scale(0.96 1)" fill="#000" stroke="#000" stroke-width="0.12" font-size="11" font-weight="normal" font-style="normal" text-anchor="end" >5.0°C</text><text transform="translate(920 829) scale(0.96 1)" fill="#000" stroke="#000" stroke-width="0.12" font-size="11" font-weight="normal" font-style="normal" text-anchor="start" >Regen/Tag</text><text transform="translate(1022 829) scale(0.96 1)" fill="#000" stroke="#000" stroke-width="0.12" font-size="11" font-weight="normal" font-style="normal" text-anchor="end" >4.1l/m²</text><text transform="translate(920 845) scale(0.96 1)" fill="#000" stroke="#000" stroke-width="0.12" font-size="11" font-weight="normal" font-style="normal" text-anchor="start" >Neumond</text><text transform="translate(1022 845) scale(0.96 1)" fill="#000" stroke="#000" stroke-width="0.12" font-size="11" font-weight="normal" font-style="normal" text-anchor="end" >17.02.07</text><text transform="translate(920 861) scale(0.96 1)" fill="#000" stroke="#000" stroke-width="0.12" font-size="11" font-weight="normal" font-style="normal" text-anchor="start" >Vollmond</text><text transform="translate(1022 861) scale(0.96 1)" fill="#000" stroke="#000" stroke-width="0.12" font-size="11" font-weight="normal" font-style="normal" text-anchor="end" >04.03.07</text></svg>
</body></html>
